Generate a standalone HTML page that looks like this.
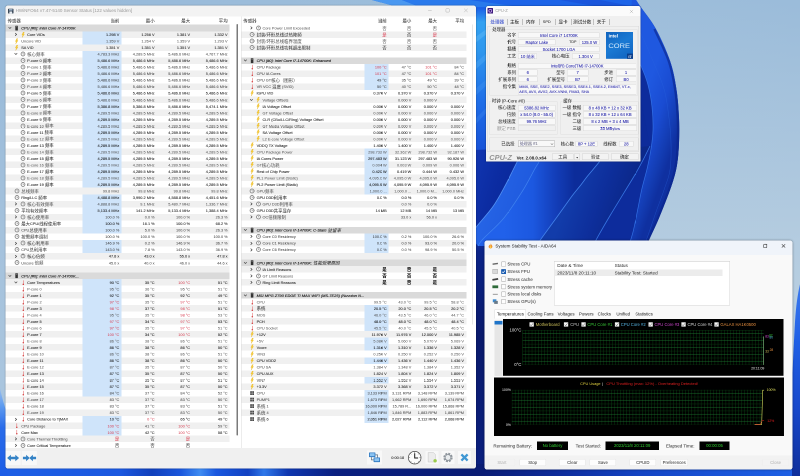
<!DOCTYPE html><html><head><meta charset="utf-8"><title>screenshot</title><style>
*{box-sizing:border-box}
html,body{margin:0;padding:0}
body{width:800px;height:476px;overflow:hidden;position:relative;background:#b4cce0}
#o{position:absolute;left:0;top:0;width:1600px;height:952px;transform:scale(0.5);transform-origin:0 0;will-change:transform;overflow:hidden}
#s{position:absolute;left:0;top:0;width:800px;height:476px;zoom:2;
 font-family:"Liberation Sans","Noto Sans CJK SC",sans-serif;font-size:3.85px;color:#1a1a1a;line-height:1}
.a{position:absolute}
.t{position:absolute;white-space:nowrap;line-height:6.52px;height:6.52px}
.r{position:absolute;height:6.819999999999999px;left:0}
.v{position:absolute;white-space:nowrap;text-align:right;line-height:6.52px;height:6.52px;top:0.3px}
.l{position:absolute;white-space:nowrap;line-height:6.52px;height:6.52px;top:0.3px}
.g{font-style:italic;color:#0a0a0a;font-size:3.95px;-webkit-text-stroke:0.09px #0a0a0a}
.c{font-size:4.4px;position:relative;top:0.35px;-webkit-text-stroke:0 transparent}
.cz .c,.czf .c{font-size:inherit;top:0}

.red{color:#d8364a;-webkit-text-stroke:0 transparent}
.ic{position:absolute}
.win{position:absolute;overflow:hidden}
.cz{position:absolute;white-space:nowrap;line-height:6px;height:6px}
.czf{position:absolute;background:#f8f8f8;border:0.3px solid #dadada;height:5.6px;line-height:5.2px;text-align:center;color:#1a1aa6;-webkit-text-stroke:0.05px #1a1aa6;white-space:nowrap;overflow:hidden}
.ad{position:absolute;white-space:nowrap;line-height:6px;height:6px}
.btn{position:absolute;background:#fdfdfd;border:0.3px solid #e6e6e6;border-radius:1.2px;text-align:center;height:6.8px;line-height:6.2px;white-space:nowrap}
</style></head><body><div id="o"><div id="s">
<svg width="0" height="0" style="position:absolute"><defs>
<symbol id="i-bolt" viewBox="0 0 6 10"><path d="M3.2 0 L0.6 5.4 L2.4 5.4 L1.2 10 L5.6 3.6 L3.5 3.6 L5.2 0 Z" fill="#f8cf3a" stroke="#e0aa18" stroke-width="0.45"/></symbol>
<symbol id="i-therm" viewBox="0 0 6 12"><rect x="2.35" y="0.6" width="1.3" height="8" fill="#e36a6a"/><circle cx="3" cy="9.7" r="1.7" fill="#cf3030"/></symbol>
<symbol id="i-clock" viewBox="0 0 10 10"><circle cx="5" cy="5" r="3.9" fill="#f6f6f6" stroke="#777" stroke-width="1.5"/><path d="M5 2.8 V5.2 H6.6" stroke="#666" stroke-width="0.8" fill="none"/></symbol>
<symbol id="i-chip" viewBox="0 0 6 10"><rect x="0.6" y="0.4" width="4.8" height="9.2" rx="0.8" fill="#333"/><rect x="1.6" y="1.6" width="2.8" height="1.4" fill="#888"/></symbol>
<symbol id="i-fan" viewBox="0 0 10 10"><rect x="0.5" y="0.5" width="9" height="9" fill="#444"/><path d="M0.5 5 H9.5 M5 0.5 V9.5" stroke="#ddd" stroke-width="1"/></symbol>
<symbol id="i-down" viewBox="0 0 10 10"><path d="M1.5 3 L5 6.8 L8.5 3" stroke="#444" stroke-width="1.6" fill="none"/></symbol>
<symbol id="i-right" viewBox="0 0 10 10"><path d="M3 1.5 L6.8 5 L3 8.5" stroke="#333" stroke-width="1.7" fill="none"/></symbol>
</defs></svg>
<svg class="a" style="left:0;top:0" width="800" height="476" viewBox="0 0 800 476">
<defs>
<linearGradient id="bg" x1="0" y1="0" x2="0" y2="1"><stop offset="0" stop-color="#9bbcda"/><stop offset="0.5" stop-color="#b4cce0"/><stop offset="1" stop-color="#c0d4e4"/></linearGradient>
<linearGradient id="bgx" x1="0" y1="0" x2="1" y2="0"><stop offset="0" stop-color="#8fb4d8" stop-opacity="0.4"/><stop offset="0.6" stop-color="#a6c4de" stop-opacity="0.2"/><stop offset="1" stop-color="#b7cfe3" stop-opacity="0"/></linearGradient>
<linearGradient id="pb" gradientUnits="userSpaceOnUse" x1="0" y1="0" x2="42" y2="22" spreadMethod="repeat"><stop offset="0" stop-color="#1f66ee"/><stop offset="0.45" stop-color="#1752da"/><stop offset="0.85" stop-color="#0c2fa6"/><stop offset="1" stop-color="#0a2794"/></linearGradient>
<linearGradient id="bAB" x1="0" y1="0.3" x2="1" y2="0.7"><stop offset="0" stop-color="#2a6aea"/><stop offset="1" stop-color="#1b54da"/></linearGradient>
<linearGradient id="bBC" gradientUnits="userSpaceOnUse" x1="505" y1="200" x2="575" y2="200"><stop offset="0" stop-color="#2161ea"/><stop offset="0.4" stop-color="#1c58e0"/><stop offset="0.7" stop-color="#1440bc"/><stop offset="1" stop-color="#0c2c9a"/></linearGradient>
<linearGradient id="bCD" gradientUnits="userSpaceOnUse" x1="570" y1="195" x2="625" y2="215"><stop offset="0" stop-color="#123caa"/><stop offset="0.5" stop-color="#0e2f9c"/><stop offset="1" stop-color="#0b2788"/></linearGradient>
<linearGradient id="bDO" gradientUnits="userSpaceOnUse" x1="640" y1="110" x2="682" y2="125"><stop offset="0" stop-color="#1f58e0"/><stop offset="0.45" stop-color="#1a4cd2"/><stop offset="0.8" stop-color="#133cb2"/><stop offset="1" stop-color="#0f30a0"/></linearGradient>
<linearGradient id="bDD" gradientUnits="userSpaceOnUse" x1="620" y1="195" x2="655" y2="205"><stop offset="0" stop-color="#1a4cc8"/><stop offset="1" stop-color="#0e2f9e"/></linearGradient>
<linearGradient id="bDE" x1="0" y1="0" x2="0" y2="1"><stop offset="0" stop-color="#1c54dc"/><stop offset="0.6" stop-color="#194cd0"/><stop offset="1" stop-color="#123aae"/></linearGradient>
<linearGradient id="bEO" x1="0" y1="0" x2="0" y2="1"><stop offset="0" stop-color="#2162e4"/><stop offset="0.28" stop-color="#1b52d4"/><stop offset="0.5" stop-color="#143cb4"/><stop offset="1" stop-color="#0f2f9c"/></linearGradient>
<linearGradient id="b1" x1="0" y1="0.3" x2="1" y2="0.7"><stop offset="0" stop-color="#2068ee"/><stop offset="0.5" stop-color="#1752da"/><stop offset="1" stop-color="#0b2b9c"/></linearGradient>
<linearGradient id="b0" x1="0" y1="0" x2="1" y2="0.6"><stop offset="0" stop-color="#1238b4"/><stop offset="0.5" stop-color="#0c2ca2"/><stop offset="1" stop-color="#0a2696"/></linearGradient>
<linearGradient id="b4" x1="0" y1="0.3" x2="1" y2="0.6"><stop offset="0" stop-color="#1a56dc"/><stop offset="1" stop-color="#0c2c9e"/></linearGradient>
<linearGradient id="vs" x1="0" y1="0" x2="0" y2="1"><stop offset="0" stop-color="#1c60e8"/><stop offset="0.03" stop-color="#34a2f2"/><stop offset="0.09" stop-color="#2f98ee"/><stop offset="0.20" stop-color="#1f6ee8"/><stop offset="0.33" stop-color="#164cd4"/><stop offset="0.46" stop-color="#1240c0"/><stop offset="0.52" stop-color="#0b2488"/><stop offset="0.7" stop-color="#0a1a6c"/><stop offset="1" stop-color="#0b2080"/></linearGradient>
<linearGradient id="bs" x1="0" y1="0" x2="1" y2="0"><stop offset="0" stop-color="#1e5fe6"/><stop offset="0.15" stop-color="#1b58e0"/><stop offset="0.19" stop-color="#1140bc"/><stop offset="0.225" stop-color="#1a56dc"/><stop offset="0.25" stop-color="#3f8cf2"/><stop offset="0.27" stop-color="#1a58e0"/><stop offset="0.31" stop-color="#1242c2"/><stop offset="0.33" stop-color="#2f78ea"/><stop offset="0.36" stop-color="#0f37b0"/><stop offset="0.42" stop-color="#0b2080"/><stop offset="0.6" stop-color="#0a1c74"/><stop offset="0.7" stop-color="#0e2c9c"/><stop offset="0.8" stop-color="#1444c4"/><stop offset="0.9" stop-color="#1a54d8"/><stop offset="1" stop-color="#1f62e6"/></linearGradient>
<linearGradient id="ls" x1="0" y1="0" x2="0" y2="1"><stop offset="0" stop-color="#9cc0ee"/><stop offset="0.2" stop-color="#5f9cf0"/><stop offset="0.45" stop-color="#2a6cea"/><stop offset="1" stop-color="#1c5ce6"/></linearGradient>
<linearGradient id="rs" x1="0" y1="0" x2="0" y2="1"><stop offset="0" stop-color="#3a7af0"/><stop offset="0.3" stop-color="#2060e6"/><stop offset="0.65" stop-color="#1848cc"/><stop offset="1" stop-color="#0f2f9c"/></linearGradient>
</defs>
<rect width="800" height="476" fill="url(#bg)"/><rect width="800" height="476" fill="url(#bgx)"/>
<path d="M474 -4 L632 -4 L636 0 C636.8 1.2 637.4 2.2 640.7 7.0 C644.0 11.8 650.8 19.6 655.7 28.6 C660.6 37.6 666.5 50.6 670.0 60.7 C673.5 70.8 674.9 79.5 676.4 89.0 C677.9 98.5 678.6 109.0 679.0 118.0 C679.4 127.0 679.3 135.2 679.0 143.0 C678.7 150.8 678.2 157.9 677.0 165.0 C675.8 172.1 674.4 177.2 671.5 185.8 C668.6 194.4 663.3 207.6 659.5 216.8 C655.7 226.0 651.1 235.1 648.5 241.0 C645.9 246.9 644.8 250.2 644.0 252.0 L474 250 Z" fill="#0d2b9a"/>
<polygon points="372,0 636,0 641,8 644,12 474,12 398,7" fill="#1d64e8"/>
<polygon points="372,0 402,0 420,7 398,7" fill="#4a98f0"/>
<polygon points="402,0 470,0 520,7 420,7" fill="#2a7aec"/>
<polygon points="560,0 600,0 636,7 600,7" fill="#1a56dc"/>
<rect x="474" y="8" width="14" height="468" fill="url(#vs)"/>
<polygon points="474,38 488,28 488,33 474,44" fill="#58b4f6" opacity="0.55"/>
<polygon points="474,64 488,52 488,58 474,71" fill="#4aa6f4" opacity="0.5"/>
<polygon points="474,90 488,78 488,84 474,97" fill="#3f90f0" opacity="0.45"/>
<polygon points="474,120 488,106 488,111 474,126" fill="#3a84ee" opacity="0.4"/>
<path d="M474.0 250.0 C474.0 233.3 474.0 166.7 474.0 150.0 L524.0 148.0 C522.8 150.3 518.8 158.3 517.0 162.0 C515.2 165.7 515.0 166.0 513.0 170.0 C511.0 174.0 508.3 179.9 505.0 186.0 C501.7 192.1 497.7 199.8 493.0 206.5 C488.3 213.2 480.8 221.1 477.0 226.0 C473.2 230.9 471.2 234.3 470.0 236.0 Z" fill="url(#b0)"/>
<path d="M470.0 236.0 C471.2 234.3 473.2 230.9 477.0 226.0 C480.8 221.1 488.3 213.2 493.0 206.5 C497.7 199.8 501.7 192.1 505.0 186.0 C508.3 179.9 511.0 174.0 513.0 170.0 C515.0 166.0 515.2 165.7 517.0 162.0 C518.8 158.3 522.8 150.3 524.0 148.0 L546.0 148.0 C544.8 150.3 540.8 158.6 539.0 162.0 C537.2 165.4 537.8 163.8 535.0 168.6 C532.2 173.4 527.8 182.7 522.5 191.0 C517.2 199.3 510.1 210.5 503.5 218.5 C496.9 226.5 487.2 234.4 483.0 239.0 C478.8 243.6 478.8 244.8 478.0 246.0 Z" fill="url(#bAB)"/>
<path d="M478.0 246.0 C478.8 244.8 478.8 243.6 483.0 239.0 C487.2 234.4 496.9 226.5 503.5 218.5 C510.1 210.5 517.2 199.3 522.5 191.0 C527.8 182.7 532.2 173.4 535.0 168.6 C537.8 163.8 537.2 165.4 539.0 162.0 C540.8 158.6 544.8 150.3 546.0 148.0 L608.0 150.0 C606.4 152.2 601.7 158.8 598.4 163.0 C595.1 167.2 591.1 171.7 588.0 175.5 C584.9 179.3 582.7 182.6 580.0 186.0 C577.3 189.4 575.8 190.8 572.0 196.0 C568.2 201.2 562.2 209.8 557.0 217.0 C551.8 224.2 544.5 234.2 541.0 239.0 C537.5 243.8 536.8 244.8 536.0 246.0 Z" fill="url(#bBC)"/>
<path d="M536.0 246.0 C536.8 244.8 537.5 243.8 541.0 239.0 C544.5 234.2 551.8 224.2 557.0 217.0 C562.2 209.8 568.2 201.2 572.0 196.0 C575.8 190.8 577.3 189.4 580.0 186.0 C582.7 182.6 584.9 179.3 588.0 175.5 C591.1 171.7 595.1 167.2 598.4 163.0 C601.7 158.8 606.4 152.2 608.0 150.0 L650.0 146.0 C648.7 148.7 644.6 157.1 642.0 162.0 C639.4 166.9 637.5 170.4 634.5 175.5 C631.5 180.6 628.0 186.1 624.0 192.7 C620.0 199.3 614.7 207.8 610.4 215.0 C606.1 222.2 601.1 230.9 598.4 235.7 C595.7 240.5 594.7 242.6 594.0 244.0 Z" fill="url(#bCD)"/>
<path d="M594.0 244.0 C594.7 242.6 595.7 240.5 598.4 235.7 C601.1 230.9 606.1 222.2 610.4 215.0 C614.7 207.8 620.0 199.3 624.0 192.7 C628.0 186.1 631.5 180.6 634.5 175.5 C637.5 170.4 639.4 166.9 642.0 162.0 C644.6 157.1 648.7 148.7 650.0 146.0 L630.0 45.0 C631.8 48.5 638.0 59.3 641.0 66.0 C644.0 72.7 646.2 78.2 648.0 85.0 C649.8 91.8 651.2 99.5 652.0 107.0 C652.8 114.5 653.2 123.0 653.0 130.0 C652.8 137.0 652.0 142.7 651.0 149.0 C650.0 155.3 648.9 161.0 647.3 167.8 C645.7 174.6 643.1 183.3 641.6 190.0 C640.1 196.7 639.4 201.0 638.0 208.0 C636.6 215.0 634.7 225.3 633.0 232.0 C631.3 238.7 628.8 245.3 628.0 248.0 Z" fill="#0d2c9c"/>
<path d="M628.0 248.0 C628.8 245.3 631.3 238.7 633.0 232.0 C634.7 225.3 636.6 215.0 638.0 208.0 C639.4 201.0 640.1 196.7 641.6 190.0 C643.1 183.3 645.7 174.6 647.3 167.8 C648.9 161.0 650.0 155.3 651.0 149.0 C652.0 142.7 652.8 137.0 653.0 130.0 C653.2 123.0 652.8 114.5 652.0 107.0 C651.2 99.5 649.8 91.8 648.0 85.0 C646.2 78.2 644.0 72.7 641.0 66.0 C638.0 59.3 631.8 48.5 630.0 45.0 L632.0 -4.0 C632.7 -3.3 634.5 -1.8 636.0 0.0 C637.5 1.8 637.4 2.2 640.7 7.0 C644.0 11.8 650.8 19.6 655.7 28.6 C660.6 37.6 666.5 50.6 670.0 60.7 C673.5 70.8 674.9 79.5 676.4 89.0 C677.9 98.5 678.6 109.0 679.0 118.0 C679.4 127.0 679.3 135.2 679.0 143.0 C678.7 150.8 678.2 157.9 677.0 165.0 C675.8 172.1 674.4 177.2 671.5 185.8 C668.6 194.4 663.3 207.6 659.5 216.8 C655.7 226.0 651.1 235.1 648.5 241.0 C645.9 246.9 644.8 250.2 644.0 252.0 Z" fill="url(#bDO)"/>
<path d="M470.0 236.0 C471.2 234.3 473.2 230.9 477.0 226.0 C480.8 221.1 488.3 213.2 493.0 206.5 C497.7 199.8 501.7 192.1 505.0 186.0 C508.3 179.9 511.0 174.0 513.0 170.0 C515.0 166.0 515.2 165.7 517.0 162.0 C518.8 158.3 522.8 150.3 524.0 148.0" fill="none" stroke="#5a9af8" stroke-width="0.8" opacity="0.9"/>
<path d="M478.0 246.0 C478.8 244.8 478.8 243.6 483.0 239.0 C487.2 234.4 496.9 226.5 503.5 218.5 C510.1 210.5 517.2 199.3 522.5 191.0 C527.8 182.7 532.2 173.4 535.0 168.6 C537.8 163.8 537.2 165.4 539.0 162.0 C540.8 158.6 544.8 150.3 546.0 148.0" fill="none" stroke="#4a8ef6" stroke-width="0.7" opacity="0.8"/>
<path d="M536.0 246.0 C536.8 244.8 537.5 243.8 541.0 239.0 C544.5 234.2 551.8 224.2 557.0 217.0 C562.2 209.8 568.2 201.2 572.0 196.0 C575.8 190.8 577.3 189.4 580.0 186.0 C582.7 182.6 584.9 179.3 588.0 175.5 C591.1 171.7 595.1 167.2 598.4 163.0 C601.7 158.8 606.4 152.2 608.0 150.0" fill="none" stroke="#4a8ef6" stroke-width="0.8" opacity="0.85"/>
<path d="M594.0 244.0 C594.7 242.6 595.7 240.5 598.4 235.7 C601.1 230.9 606.1 222.2 610.4 215.0 C614.7 207.8 620.0 199.3 624.0 192.7 C628.0 186.1 631.5 180.6 634.5 175.5 C637.5 170.4 639.4 166.9 642.0 162.0 C644.6 157.1 648.7 148.7 650.0 146.0" fill="none" stroke="#3f82f0" stroke-width="0.8" opacity="0.85"/>
<path d="M628.0 248.0 C628.8 245.3 631.3 238.7 633.0 232.0 C634.7 225.3 636.6 215.0 638.0 208.0 C639.4 201.0 640.1 196.7 641.6 190.0 C643.1 183.3 645.7 174.6 647.3 167.8 C648.9 161.0 650.0 155.3 651.0 149.0 C652.0 142.7 652.8 137.0 653.0 130.0 C653.2 123.0 652.8 114.5 652.0 107.0 C651.2 99.5 649.8 91.8 648.0 85.0 C646.2 78.2 644.0 72.7 641.0 66.0 C638.0 59.3 631.8 48.5 630.0 45.0" fill="none" stroke="#3a7cf0" stroke-width="0.7" opacity="0.8"/>
<path d="M642.0 248.0 C642.7 246.8 643.7 247.0 646.0 241.0 C648.3 235.0 653.0 220.5 656.0 212.0 C659.0 203.5 661.7 197.0 664.0 190.0 C666.3 183.0 668.8 177.8 670.0 170.0 C671.2 162.2 671.2 151.7 671.0 143.0 C670.8 134.3 670.2 127.0 669.0 118.0 C667.8 109.0 666.8 98.7 664.0 89.0 C661.2 79.3 656.3 69.2 652.5 60.0 C648.7 50.8 644.4 40.7 641.0 34.0 C637.6 27.3 633.5 22.3 632.0 20.0" fill="none" stroke="#2a66e0" stroke-width="0.5" opacity="0.5"/>
<path d="M647.2 241.4 C649.0 237.4 654.4 226.4 658.2 217.2 C662.0 208.0 667.3 194.8 670.2 186.2 C673.1 177.6 674.5 172.5 675.7 165.4 C677.0 158.3 677.4 151.2 677.7 143.4 C678.0 135.6 678.1 127.4 677.7 118.4 C677.3 109.4 676.6 99.0 675.1 89.4 C673.6 79.9 672.2 71.2 668.7 61.1 C665.2 51.0 656.8 34.4 654.4 29.0" fill="none" stroke="#0a2488" stroke-width="2.2" opacity="0.6"/>
<rect x="0" y="464" width="800" height="12" fill="url(#bs)"/>
<path d="M0 388 C2 398 5 408 8 416 L8 476 L0 476 Z" fill="url(#ls)"/>
<path d="M800.5 282 C798 292 796 305 795 322 C794 340 793 360 792 385 L792 476 L800.5 476 Z" fill="url(#rs)"/>
</svg>
<div class="win" style="left:5.3px;top:5.6px;width:470.7px;height:463.1px;background:#f0f0f0;border-radius:2.6px;box-shadow:0 0 1.5px rgba(0,0,0,.45)">
<div class="a" style="left:0;top:0;width:470.7px;height:10.7px;background:#f3f3f3"></div>
<svg class="a" style="left:2.8px;top:2.9px" width="5.6" height="5.2" viewBox="0 0 11 10"><rect x="0.3" y="0.3" width="10.4" height="9.4" rx="1" fill="#1b2a3c"/><rect x="2" y="1" width="7" height="3.2" fill="#9fb4c8"/><rect x="2.6" y="5.6" width="5.8" height="4" fill="#e8eef4"/></svg>
<div class="t" style="left:10.3px;top:1.84px;color:#9b9b9b;font-size:4.5px">HWiNFO64 v7.47-5140 Sensor Status [122 values hidden]</div>
<svg class="a" style="left:421.3px;top:1.1px" width="44" height="8" viewBox="0 0 44 8"><path d="M1.6 4 H5.2" stroke="#b5b5b5" stroke-width="0.5"/><rect x="19.4" y="2.2" width="3.4" height="3.4" rx="0.6" fill="none" stroke="#b5b5b5" stroke-width="0.5"/><path d="M37.6 2.1 L41.2 5.7 M41.2 2.1 L37.6 5.7" stroke="#b5b5b5" stroke-width="0.5"/></svg>
<div class="a" style="left:0;top:10.70px;width:470.7px;height:431.70px;background:#fff"></div>
<div class="a" style="left:235.6px;top:10.90px;width:0.5px;height:431.50px;background:#d9d9d9"></div>
<div class="a" style="left:231.0px;top:18.30px;width:1.5px;height:411.70px;background:#7a7a7a;border-radius:0.8px"></div>
<div class="a" style="left:467.3px;top:18.90px;width:0.6px;height:300.00px;background:#cfcfcf"></div>
<div class="t" style="left:2.3px;top:12.34px;font-size:4.4px">传感器</div>
<div class="t" style="left:84.0px;width:30px;text-align:right;top:12.34px;font-size:4.4px">当前</div>
<div class="t" style="left:119.3px;width:30px;text-align:right;top:12.34px;font-size:4.4px">最小</div>
<div class="t" style="left:154.8px;width:30px;text-align:right;top:12.34px;font-size:4.4px">最大</div>
<div class="t" style="left:192.3px;width:30px;text-align:right;top:12.34px;font-size:4.4px">平均</div>
<div class="r" style="left:0.0px;top:19.15px;width:224.3px;background:#dadada;color:#1d1d1d;-webkit-text-stroke:0.05px #111"><svg class="ic" style="left:2.90px;top:1.36px" width="3.80" height="3.80"><use href="#i-down"/></svg><svg class="ic" style="left:9.90px;top:0.56px" width="3.20" height="5.40"><use href="#i-chip"/></svg><div class="l g" style="left:15.9px">CPU [#0]: Intel Core i7-14700K</div></div>
<div class="r" style="left:0.0px;top:25.67px;width:224.3px;background:#f0f0f0;color:#171717;-webkit-text-stroke:0.05px #111"><div class="a" style="left:77.2px;top:0;width:39.0px;height:6.82px;background:#cfe4fa"></div><svg class="ic" style="left:8.70px;top:1.36px" width="3.80" height="3.80"><use href="#i-right"/></svg><svg class="ic" style="left:16.00px;top:0.51px" width="3.30" height="5.50"><use href="#i-bolt"/></svg><div class="l" style="left:21.8px">Core VIDs</div><div class="v bv" style="left:74.0px;width:40px">1.298 V</div><div class="v" style="left:109.3px;width:40px">1.256 V</div><div class="v" style="left:144.8px;width:40px">1.381 V</div><div class="v" style="left:182.3px;width:40px">1.332 V</div></div>
<div class="r" style="left:0.0px;top:32.19px;width:224.3px;background:#fff;color:#494949"><div class="a" style="left:77.2px;top:0;width:39.0px;height:6.82px;background:#cfe4fa"></div><svg class="ic" style="left:9.80px;top:0.51px" width="3.30" height="5.50"><use href="#i-bolt"/></svg><div class="l" style="left:15.9px">Uncore VID</div><div class="v bv" style="left:74.0px;width:40px">1.359 V</div><div class="v" style="left:109.3px;width:40px">1.264 V</div><div class="v" style="left:144.8px;width:40px">1.359 V</div><div class="v" style="left:182.3px;width:40px">1.293 V</div></div>
<div class="r" style="left:0.0px;top:38.71px;width:224.3px;background:#f0f0f0;color:#1e1e1e;-webkit-text-stroke:0.05px #111"><svg class="ic" style="left:9.80px;top:0.51px" width="3.30" height="5.50"><use href="#i-bolt"/></svg><div class="l" style="left:15.9px">SA VID</div><div class="v" style="left:74.0px;width:40px">1.351 V</div><div class="v" style="left:109.3px;width:40px">1.351 V</div><div class="v" style="left:144.8px;width:40px">1.351 V</div><div class="v" style="left:182.3px;width:40px">1.351 V</div></div>
<div class="r" style="left:0.0px;top:45.23px;width:224.3px;background:#fff;color:#424242"><div class="a" style="left:77.2px;top:0;width:39.0px;height:6.82px;background:#cfe4fa"></div><svg class="ic" style="left:8.70px;top:1.36px" width="3.80" height="3.80"><use href="#i-down"/></svg><svg class="ic" style="left:15.20px;top:0.76px" width="5.00" height="5.00"><use href="#i-clock"/></svg><div class="l" style="left:21.8px"><span class="c">核心频率</span></div><div class="v bv" style="left:74.0px;width:40px">4,783.3 MHz</div><div class="v" style="left:109.3px;width:40px">4,289.5 MHz</div><div class="v" style="left:144.8px;width:40px">5,486.6 MHz</div><div class="v" style="left:182.3px;width:40px">4,767.7 MHz</div></div>
<div class="r" style="left:0.0px;top:51.75px;width:224.3px;background:#f0f0f0;color:#252525;-webkit-text-stroke:0.05px #111"><div class="a" style="left:77.2px;top:0;width:39.0px;height:6.82px;background:#cfe4fa"></div><svg class="ic" style="left:15.20px;top:0.76px" width="5.00" height="5.00"><use href="#i-clock"/></svg><div class="l" style="left:21.8px">P-core 0 <span class="c">频率</span></div><div class="v bv" style="left:74.0px;width:40px">5,486.6 MHz</div><div class="v" style="left:109.3px;width:40px">5,486.6 MHz</div><div class="v" style="left:144.8px;width:40px">5,486.6 MHz</div><div class="v" style="left:182.3px;width:40px">5,486.6 MHz</div></div>
<div class="r" style="left:0.0px;top:58.27px;width:224.3px;background:#fff;color:#3a3a3a"><div class="a" style="left:77.2px;top:0;width:39.0px;height:6.82px;background:#cfe4fa"></div><svg class="ic" style="left:15.20px;top:0.76px" width="5.00" height="5.00"><use href="#i-clock"/></svg><div class="l" style="left:21.8px">P-core 1 <span class="c">频率</span></div><div class="v bv" style="left:74.0px;width:40px">5,486.6 MHz</div><div class="v" style="left:109.3px;width:40px">5,486.6 MHz</div><div class="v" style="left:144.8px;width:40px">5,486.6 MHz</div><div class="v" style="left:182.3px;width:40px">5,486.6 MHz</div></div>
<div class="r" style="left:0.0px;top:64.79px;width:224.3px;background:#f0f0f0;color:#2d2d2d"><div class="a" style="left:77.2px;top:0;width:39.0px;height:6.82px;background:#cfe4fa"></div><svg class="ic" style="left:15.20px;top:0.76px" width="5.00" height="5.00"><use href="#i-clock"/></svg><div class="l" style="left:21.8px">P-core 2 <span class="c">频率</span></div><div class="v bv" style="left:74.0px;width:40px">5,486.6 MHz</div><div class="v" style="left:109.3px;width:40px">5,486.6 MHz</div><div class="v" style="left:144.8px;width:40px">5,486.6 MHz</div><div class="v" style="left:182.3px;width:40px">5,486.6 MHz</div></div>
<div class="r" style="left:0.0px;top:71.31px;width:224.3px;background:#fff;color:#323232"><div class="a" style="left:77.2px;top:0;width:39.0px;height:6.82px;background:#cfe4fa"></div><svg class="ic" style="left:15.20px;top:0.76px" width="5.00" height="5.00"><use href="#i-clock"/></svg><div class="l" style="left:21.8px">P-core 3 <span class="c">频率</span></div><div class="v bv" style="left:74.0px;width:40px">5,486.6 MHz</div><div class="v" style="left:109.3px;width:40px">5,486.6 MHz</div><div class="v" style="left:144.8px;width:40px">5,486.6 MHz</div><div class="v" style="left:182.3px;width:40px">5,486.6 MHz</div></div>
<div class="r" style="left:0.0px;top:77.83px;width:224.3px;background:#f0f0f0;color:#363636"><div class="a" style="left:77.2px;top:0;width:39.0px;height:6.82px;background:#cfe4fa"></div><svg class="ic" style="left:15.20px;top:0.76px" width="5.00" height="5.00"><use href="#i-clock"/></svg><div class="l" style="left:21.8px">P-core 4 <span class="c">频率</span></div><div class="v bv" style="left:74.0px;width:40px">5,486.6 MHz</div><div class="v" style="left:109.3px;width:40px">5,486.6 MHz</div><div class="v" style="left:144.8px;width:40px">5,486.6 MHz</div><div class="v" style="left:182.3px;width:40px">5,486.6 MHz</div></div>
<div class="r" style="left:0.0px;top:84.35px;width:224.3px;background:#fff;color:#292929;-webkit-text-stroke:0.05px #111"><div class="a" style="left:77.2px;top:0;width:39.0px;height:6.82px;background:#cfe4fa"></div><svg class="ic" style="left:15.20px;top:0.76px" width="5.00" height="5.00"><use href="#i-clock"/></svg><div class="l" style="left:21.8px">P-core 5 <span class="c">频率</span></div><div class="v bv" style="left:74.0px;width:40px">5,486.6 MHz</div><div class="v" style="left:109.3px;width:40px">5,486.6 MHz</div><div class="v" style="left:144.8px;width:40px">5,486.6 MHz</div><div class="v" style="left:182.3px;width:40px">5,486.6 MHz</div></div>
<div class="r" style="left:0.0px;top:90.87px;width:224.3px;background:#f0f0f0;color:#3e3e3e"><div class="a" style="left:77.2px;top:0;width:39.0px;height:6.82px;background:#cfe4fa"></div><svg class="ic" style="left:15.20px;top:0.76px" width="5.00" height="5.00"><use href="#i-clock"/></svg><div class="l" style="left:21.8px">P-core 6 <span class="c">频率</span></div><div class="v bv" style="left:74.0px;width:40px">5,486.6 MHz</div><div class="v" style="left:109.3px;width:40px">5,486.6 MHz</div><div class="v" style="left:144.8px;width:40px">5,486.6 MHz</div><div class="v" style="left:182.3px;width:40px">5,486.6 MHz</div></div>
<div class="r" style="left:0.0px;top:97.39px;width:224.3px;background:#fff;color:#212121;-webkit-text-stroke:0.05px #111"><div class="a" style="left:77.2px;top:0;width:39.0px;height:6.82px;background:#cfe4fa"></div><svg class="ic" style="left:15.20px;top:0.76px" width="5.00" height="5.00"><use href="#i-clock"/></svg><div class="l" style="left:21.8px">P-core 7 <span class="c">频率</span></div><div class="v bv" style="left:74.0px;width:40px">5,386.8 MHz</div><div class="v" style="left:109.3px;width:40px">5,386.8 MHz</div><div class="v" style="left:144.8px;width:40px">5,486.6 MHz</div><div class="v" style="left:182.3px;width:40px">5,474.1 MHz</div></div>
<div class="r" style="left:0.0px;top:103.91px;width:224.3px;background:#f0f0f0;color:#454545"><div class="a" style="left:77.2px;top:0;width:39.0px;height:6.82px;background:#cfe4fa"></div><svg class="ic" style="left:15.20px;top:0.76px" width="5.00" height="5.00"><use href="#i-clock"/></svg><div class="l" style="left:21.8px">E-core 8 <span class="c">频率</span></div><div class="v bv" style="left:74.0px;width:40px">4,289.5 MHz</div><div class="v" style="left:109.3px;width:40px">4,289.5 MHz</div><div class="v" style="left:144.8px;width:40px">4,289.5 MHz</div><div class="v" style="left:182.3px;width:40px">4,289.5 MHz</div></div>
<div class="r" style="left:0.0px;top:110.43px;width:224.3px;background:#fff;color:#1a1a1a;-webkit-text-stroke:0.05px #111"><div class="a" style="left:77.2px;top:0;width:39.0px;height:6.82px;background:#cfe4fa"></div><svg class="ic" style="left:15.20px;top:0.76px" width="5.00" height="5.00"><use href="#i-clock"/></svg><div class="l" style="left:21.8px">E-core 9 <span class="c">频率</span></div><div class="v bv" style="left:74.0px;width:40px">4,289.5 MHz</div><div class="v" style="left:109.3px;width:40px">4,289.5 MHz</div><div class="v" style="left:144.8px;width:40px">4,289.5 MHz</div><div class="v" style="left:182.3px;width:40px">4,289.5 MHz</div></div>
<div class="r" style="left:0.0px;top:116.95px;width:224.3px;background:#f0f0f0;color:#4c4c4c"><div class="a" style="left:77.2px;top:0;width:39.0px;height:6.82px;background:#cfe4fa"></div><svg class="ic" style="left:15.20px;top:0.76px" width="5.00" height="5.00"><use href="#i-clock"/></svg><div class="l" style="left:21.8px">E-core 10 <span class="c">频率</span></div><div class="v bv" style="left:74.0px;width:40px">4,289.5 MHz</div><div class="v" style="left:109.3px;width:40px">4,289.5 MHz</div><div class="v" style="left:144.8px;width:40px">4,289.5 MHz</div><div class="v" style="left:182.3px;width:40px">4,289.5 MHz</div></div>
<div class="r" style="left:0.0px;top:123.47px;width:224.3px;background:#fff;color:#151515;-webkit-text-stroke:0.05px #111"><div class="a" style="left:77.2px;top:0;width:39.0px;height:6.82px;background:#cfe4fa"></div><svg class="ic" style="left:15.20px;top:0.76px" width="5.00" height="5.00"><use href="#i-clock"/></svg><div class="l" style="left:21.8px">E-core 11 <span class="c">频率</span></div><div class="v bv" style="left:74.0px;width:40px">4,289.5 MHz</div><div class="v" style="left:109.3px;width:40px">4,289.5 MHz</div><div class="v" style="left:144.8px;width:40px">4,289.5 MHz</div><div class="v" style="left:182.3px;width:40px">4,289.5 MHz</div></div>
<div class="r" style="left:0.0px;top:129.99px;width:224.3px;background:#f0f0f0;color:#505050"><div class="a" style="left:77.2px;top:0;width:39.0px;height:6.82px;background:#cfe4fa"></div><svg class="ic" style="left:15.20px;top:0.76px" width="5.00" height="5.00"><use href="#i-clock"/></svg><div class="l" style="left:21.8px">E-core 12 <span class="c">频率</span></div><div class="v bv" style="left:74.0px;width:40px">4,289.5 MHz</div><div class="v" style="left:109.3px;width:40px">4,289.5 MHz</div><div class="v" style="left:144.8px;width:40px">4,289.5 MHz</div><div class="v" style="left:182.3px;width:40px">4,289.5 MHz</div></div>
<div class="r" style="left:0.0px;top:136.51px;width:224.3px;background:#fff;color:#111111;-webkit-text-stroke:0.05px #111"><div class="a" style="left:77.2px;top:0;width:39.0px;height:6.82px;background:#cfe4fa"></div><svg class="ic" style="left:15.20px;top:0.76px" width="5.00" height="5.00"><use href="#i-clock"/></svg><div class="l" style="left:21.8px">E-core 13 <span class="c">频率</span></div><div class="v bv" style="left:74.0px;width:40px">4,289.5 MHz</div><div class="v" style="left:109.3px;width:40px">4,289.5 MHz</div><div class="v" style="left:144.8px;width:40px">4,289.5 MHz</div><div class="v" style="left:182.3px;width:40px">4,289.5 MHz</div></div>
<div class="r" style="left:0.0px;top:143.03px;width:224.3px;background:#f0f0f0;color:#535353"><div class="a" style="left:77.2px;top:0;width:39.0px;height:6.82px;background:#cfe4fa"></div><svg class="ic" style="left:15.20px;top:0.76px" width="5.00" height="5.00"><use href="#i-clock"/></svg><div class="l" style="left:21.8px">E-core 14 <span class="c">频率</span></div><div class="v bv" style="left:74.0px;width:40px">4,289.5 MHz</div><div class="v" style="left:109.3px;width:40px">4,289.5 MHz</div><div class="v" style="left:144.8px;width:40px">4,289.5 MHz</div><div class="v" style="left:182.3px;width:40px">4,289.5 MHz</div></div>
<div class="r" style="left:0.0px;top:149.55px;width:224.3px;background:#fff;color:#101010;-webkit-text-stroke:0.05px #111"><div class="a" style="left:77.2px;top:0;width:39.0px;height:6.82px;background:#cfe4fa"></div><svg class="ic" style="left:15.20px;top:0.76px" width="5.00" height="5.00"><use href="#i-clock"/></svg><div class="l" style="left:21.8px">E-core 15 <span class="c">频率</span></div><div class="v bv" style="left:74.0px;width:40px">4,289.5 MHz</div><div class="v" style="left:109.3px;width:40px">4,289.5 MHz</div><div class="v" style="left:144.8px;width:40px">4,289.5 MHz</div><div class="v" style="left:182.3px;width:40px">4,289.5 MHz</div></div>
<div class="r" style="left:0.0px;top:156.07px;width:224.3px;background:#f0f0f0;color:#535353"><div class="a" style="left:77.2px;top:0;width:39.0px;height:6.82px;background:#cfe4fa"></div><svg class="ic" style="left:15.20px;top:0.76px" width="5.00" height="5.00"><use href="#i-clock"/></svg><div class="l" style="left:21.8px">E-core 16 <span class="c">频率</span></div><div class="v bv" style="left:74.0px;width:40px">4,289.5 MHz</div><div class="v" style="left:109.3px;width:40px">4,289.5 MHz</div><div class="v" style="left:144.8px;width:40px">4,289.5 MHz</div><div class="v" style="left:182.3px;width:40px">4,289.5 MHz</div></div>
<div class="r" style="left:0.0px;top:162.59px;width:224.3px;background:#fff;color:#101010;-webkit-text-stroke:0.05px #111"><div class="a" style="left:77.2px;top:0;width:39.0px;height:6.82px;background:#cfe4fa"></div><svg class="ic" style="left:15.20px;top:0.76px" width="5.00" height="5.00"><use href="#i-clock"/></svg><div class="l" style="left:21.8px">E-core 17 <span class="c">频率</span></div><div class="v bv" style="left:74.0px;width:40px">4,289.5 MHz</div><div class="v" style="left:109.3px;width:40px">4,289.5 MHz</div><div class="v" style="left:144.8px;width:40px">4,289.5 MHz</div><div class="v" style="left:182.3px;width:40px">4,289.5 MHz</div></div>
<div class="r" style="left:0.0px;top:169.11px;width:224.3px;background:#f0f0f0;color:#525252"><div class="a" style="left:77.2px;top:0;width:39.0px;height:6.82px;background:#cfe4fa"></div><svg class="ic" style="left:15.20px;top:0.76px" width="5.00" height="5.00"><use href="#i-clock"/></svg><div class="l" style="left:21.8px">E-core 18 <span class="c">频率</span></div><div class="v bv" style="left:74.0px;width:40px">4,289.5 MHz</div><div class="v" style="left:109.3px;width:40px">4,289.5 MHz</div><div class="v" style="left:144.8px;width:40px">4,289.5 MHz</div><div class="v" style="left:182.3px;width:40px">4,289.5 MHz</div></div>
<div class="r" style="left:0.0px;top:175.63px;width:224.3px;background:#fff;color:#131313;-webkit-text-stroke:0.05px #111"><div class="a" style="left:77.2px;top:0;width:39.0px;height:6.82px;background:#cfe4fa"></div><svg class="ic" style="left:15.20px;top:0.76px" width="5.00" height="5.00"><use href="#i-clock"/></svg><div class="l" style="left:21.8px">E-core 19 <span class="c">频率</span></div><div class="v bv" style="left:74.0px;width:40px">4,289.5 MHz</div><div class="v" style="left:109.3px;width:40px">4,289.5 MHz</div><div class="v" style="left:144.8px;width:40px">4,289.5 MHz</div><div class="v" style="left:182.3px;width:40px">4,289.5 MHz</div></div>
<div class="r" style="left:0.0px;top:182.15px;width:224.3px;background:#f0f0f0;color:#4e4e4e"><svg class="ic" style="left:9.00px;top:0.76px" width="5.00" height="5.00"><use href="#i-clock"/></svg><div class="l" style="left:15.9px"><span class="c">总线频率</span></div><div class="v" style="left:74.0px;width:40px">99.8 MHz</div><div class="v" style="left:109.3px;width:40px">99.8 MHz</div><div class="v" style="left:144.8px;width:40px">99.8 MHz</div><div class="v" style="left:182.3px;width:40px">99.8 MHz</div></div>
<div class="r" style="left:0.0px;top:188.67px;width:224.3px;background:#fff;color:#171717;-webkit-text-stroke:0.05px #111"><div class="a" style="left:77.2px;top:0;width:39.0px;height:6.82px;background:#cfe4fa"></div><svg class="ic" style="left:9.00px;top:0.76px" width="5.00" height="5.00"><use href="#i-clock"/></svg><div class="l" style="left:15.9px">Ring/LLC <span class="c">频率</span></div><div class="v bv" style="left:74.0px;width:40px">4,488.8 MHz</div><div class="v" style="left:109.3px;width:40px">3,990.2 MHz</div><div class="v" style="left:144.8px;width:40px">4,588.8 MHz</div><div class="v" style="left:182.3px;width:40px">4,451.6 MHz</div></div>
<div class="r" style="left:0.0px;top:195.19px;width:224.3px;background:#f0f0f0;color:#494949"><div class="a" style="left:77.2px;top:0;width:39.0px;height:6.82px;background:#cfe4fa"></div><svg class="ic" style="left:8.70px;top:1.36px" width="3.80" height="3.80"><use href="#i-right"/></svg><svg class="ic" style="left:15.20px;top:0.76px" width="5.00" height="5.00"><use href="#i-clock"/></svg><div class="l" style="left:21.8px"><span class="c">核心有效频率</span></div><div class="v bv" style="left:74.0px;width:40px">4,888.8 MHz</div><div class="v" style="left:109.3px;width:40px">9.1 MHz</div><div class="v" style="left:144.8px;width:40px">5,480.7 MHz</div><div class="v" style="left:182.3px;width:40px">1,336.7 MHz</div></div>
<div class="r" style="left:0.0px;top:201.71px;width:224.3px;background:#fff;color:#1e1e1e;-webkit-text-stroke:0.05px #111"><div class="a" style="left:77.2px;top:0;width:39.0px;height:6.82px;background:#cfe4fa"></div><svg class="ic" style="left:9.00px;top:0.76px" width="5.00" height="5.00"><use href="#i-clock"/></svg><div class="l" style="left:15.9px"><span class="c">平均有效频率</span></div><div class="v bv" style="left:74.0px;width:40px">5,133.4 MHz</div><div class="v" style="left:109.3px;width:40px">141.2 MHz</div><div class="v" style="left:144.8px;width:40px">5,133.4 MHz</div><div class="v" style="left:182.3px;width:40px">1,388.4 MHz</div></div>
<div class="r" style="left:0.0px;top:208.23px;width:224.3px;background:#f0f0f0;color:#424242"><div class="a" style="left:77.2px;top:0;width:39.0px;height:6.82px;background:#cfe4fa"></div><svg class="ic" style="left:8.70px;top:1.36px" width="3.80" height="3.80"><use href="#i-right"/></svg><svg class="ic" style="left:15.20px;top:0.76px" width="5.00" height="5.00"><use href="#i-clock"/></svg><div class="l" style="left:21.8px"><span class="c">核心使用率</span></div><div class="v bv" style="left:74.0px;width:40px">100.0 %</div><div class="v" style="left:109.3px;width:40px">0.0 %</div><div class="v" style="left:144.8px;width:40px">100.0 %</div><div class="v" style="left:182.3px;width:40px">26.3 %</div></div>
<div class="r" style="left:0.0px;top:214.75px;width:224.3px;background:#fff;color:#252525;-webkit-text-stroke:0.05px #111"><div class="a" style="left:77.2px;top:0;width:39.0px;height:6.82px;background:#cfe4fa"></div><svg class="ic" style="left:9.00px;top:0.76px" width="5.00" height="5.00"><use href="#i-clock"/></svg><div class="l" style="left:15.9px"><span class="c">最大</span>CPU/<span class="c">线程使用率</span></div><div class="v bv" style="left:74.0px;width:40px">100.0 %</div><div class="v" style="left:109.3px;width:40px">16.1 %</div><div class="v" style="left:144.8px;width:40px">100.0 %</div><div class="v" style="left:182.3px;width:40px">68.2 %</div></div>
<div class="r" style="left:0.0px;top:221.27px;width:224.3px;background:#f0f0f0;color:#3a3a3a"><div class="a" style="left:77.2px;top:0;width:39.0px;height:6.82px;background:#cfe4fa"></div><svg class="ic" style="left:9.00px;top:0.76px" width="5.00" height="5.00"><use href="#i-clock"/></svg><div class="l" style="left:15.9px">CPU<span class="c">总使用率</span></div><div class="v bv" style="left:74.0px;width:40px">100.0 %</div><div class="v" style="left:109.3px;width:40px">5.0 %</div><div class="v" style="left:144.8px;width:40px">100.0 %</div><div class="v" style="left:182.3px;width:40px">26.3 %</div></div>
<div class="r" style="left:0.0px;top:227.79px;width:224.3px;background:#fff;color:#2d2d2d"><svg class="ic" style="left:9.00px;top:0.76px" width="5.00" height="5.00"><use href="#i-clock"/></svg><div class="l" style="left:15.9px"><span class="c">按需频率调制</span></div><div class="v" style="left:74.0px;width:40px">100.0 %</div><div class="v" style="left:109.3px;width:40px">100.0 %</div><div class="v" style="left:144.8px;width:40px">100.0 %</div><div class="v" style="left:182.3px;width:40px">100.0 %</div></div>
<div class="r" style="left:0.0px;top:234.31px;width:224.3px;background:#f0f0f0;color:#323232"><div class="a" style="left:77.2px;top:0;width:39.0px;height:6.82px;background:#cfe4fa"></div><svg class="ic" style="left:8.70px;top:1.36px" width="3.80" height="3.80"><use href="#i-right"/></svg><svg class="ic" style="left:15.20px;top:0.76px" width="5.00" height="5.00"><use href="#i-clock"/></svg><div class="l" style="left:21.8px"><span class="c">核心利用率</span></div><div class="v bv" style="left:74.0px;width:40px">146.9 %</div><div class="v" style="left:109.3px;width:40px">0.2 %</div><div class="v" style="left:144.8px;width:40px">146.9 %</div><div class="v" style="left:182.3px;width:40px">36.7 %</div></div>
<div class="r" style="left:0.0px;top:240.83px;width:224.3px;background:#fff;color:#363636"><div class="a" style="left:77.2px;top:0;width:39.0px;height:6.82px;background:#cfe4fa"></div><svg class="ic" style="left:9.00px;top:0.76px" width="5.00" height="5.00"><use href="#i-clock"/></svg><div class="l" style="left:15.9px">CPU<span class="c">总利用率</span></div><div class="v bv" style="left:74.0px;width:40px">143.0 %</div><div class="v" style="left:109.3px;width:40px">7.8 %</div><div class="v" style="left:144.8px;width:40px">143.0 %</div><div class="v" style="left:182.3px;width:40px">36.9 %</div></div>
<div class="r" style="left:0.0px;top:247.35px;width:224.3px;background:#f0f0f0;color:#292929;-webkit-text-stroke:0.05px #111"><svg class="ic" style="left:8.70px;top:1.36px" width="3.80" height="3.80"><use href="#i-right"/></svg><svg class="ic" style="left:15.20px;top:0.76px" width="5.00" height="5.00"><use href="#i-clock"/></svg><div class="l" style="left:21.8px"><span class="c">核心倍频</span></div><div class="v" style="left:74.0px;width:40px">47.8 x</div><div class="v" style="left:109.3px;width:40px">43.0 x</div><div class="v" style="left:144.8px;width:40px">55.0 x</div><div class="v" style="left:182.3px;width:40px">47.8 x</div></div>
<div class="r" style="left:0.0px;top:253.87px;width:224.3px;background:#fff;color:#3e3e3e"><svg class="ic" style="left:9.00px;top:0.76px" width="5.00" height="5.00"><use href="#i-clock"/></svg><div class="l" style="left:15.9px">Uncore <span class="c">倍频</span></div><div class="v" style="left:74.0px;width:40px">45.0 x</div><div class="v" style="left:109.3px;width:40px">40.0 x</div><div class="v" style="left:144.8px;width:40px">46.0 x</div><div class="v" style="left:182.3px;width:40px">44.6 x</div></div>
<div class="r" style="left:0.0px;top:260.39px;width:224.3px;background:#f0f0f0"></div>
<div class="r" style="left:0.0px;top:266.91px;width:224.3px;background:#dadada;color:#1d1d1d;-webkit-text-stroke:0.05px #111"><svg class="ic" style="left:2.90px;top:1.36px" width="3.80" height="3.80"><use href="#i-down"/></svg><svg class="ic" style="left:9.90px;top:0.56px" width="3.20" height="5.40"><use href="#i-chip"/></svg><div class="l g" style="left:15.9px">CPU [#0]: Intel Core i7-14700K...</div></div>
<div class="r" style="left:0.0px;top:273.43px;width:224.3px;background:#f0f0f0;color:#1a1a1a;-webkit-text-stroke:0.05px #111"><div class="a" style="left:77.2px;top:0;width:39.0px;height:6.82px;background:#cfe4fa"></div><svg class="ic" style="left:8.70px;top:1.36px" width="3.80" height="3.80"><use href="#i-down"/></svg><svg class="ic" style="left:16.50px;top:0.76px" width="2.60" height="5.40"><use href="#i-therm"/></svg><div class="l" style="left:21.8px">Core Temperatures</div><div class="v bv" style="left:74.0px;width:40px">90 °C</div><div class="v" style="left:109.3px;width:40px">35 °C</div><div class="v red" style="left:144.8px;width:40px">100 °C</div><div class="v" style="left:182.3px;width:40px">51 °C</div></div>
<div class="r" style="left:0.0px;top:279.95px;width:224.3px;background:#fff;color:#4c4c4c"><div class="a" style="left:77.2px;top:0;width:39.0px;height:6.82px;background:#cfe4fa"></div><svg class="ic" style="left:16.50px;top:0.76px" width="2.60" height="5.40"><use href="#i-therm"/></svg><div class="l" style="left:21.8px">P-core 0</div><div class="v bv" style="left:74.0px;width:40px">95 °C</div><div class="v" style="left:109.3px;width:40px">36 °C</div><div class="v" style="left:144.8px;width:40px">95 °C</div><div class="v" style="left:182.3px;width:40px">51 °C</div></div>
<div class="r" style="left:0.0px;top:286.47px;width:224.3px;background:#f0f0f0;color:#151515;-webkit-text-stroke:0.05px #111"><div class="a" style="left:77.2px;top:0;width:39.0px;height:6.82px;background:#cfe4fa"></div><svg class="ic" style="left:16.50px;top:0.76px" width="2.60" height="5.40"><use href="#i-therm"/></svg><div class="l" style="left:21.8px">P-core 1</div><div class="v bv" style="left:74.0px;width:40px">92 °C</div><div class="v" style="left:109.3px;width:40px">35 °C</div><div class="v" style="left:144.8px;width:40px">92 °C</div><div class="v" style="left:182.3px;width:40px">49 °C</div></div>
<div class="r" style="left:0.0px;top:292.99px;width:224.3px;background:#fff;color:#505050"><div class="a" style="left:77.2px;top:0;width:39.0px;height:6.82px;background:#cfe4fa"></div><svg class="ic" style="left:16.50px;top:0.76px" width="2.60" height="5.40"><use href="#i-therm"/></svg><div class="l" style="left:21.8px">P-core 2</div><div class="v bv red" style="left:74.0px;width:40px">97 °C</div><div class="v" style="left:109.3px;width:40px">35 °C</div><div class="v red" style="left:144.8px;width:40px">97 °C</div><div class="v" style="left:182.3px;width:40px">51 °C</div></div>
<div class="r" style="left:0.0px;top:299.51px;width:224.3px;background:#f0f0f0;color:#111111;-webkit-text-stroke:0.05px #111"><div class="a" style="left:77.2px;top:0;width:39.0px;height:6.82px;background:#cfe4fa"></div><svg class="ic" style="left:16.50px;top:0.76px" width="2.60" height="5.40"><use href="#i-therm"/></svg><div class="l" style="left:21.8px">P-core 3</div><div class="v bv red" style="left:74.0px;width:40px">98 °C</div><div class="v" style="left:109.3px;width:40px">37 °C</div><div class="v red" style="left:144.8px;width:40px">98 °C</div><div class="v" style="left:182.3px;width:40px">51 °C</div></div>
<div class="r" style="left:0.0px;top:306.03px;width:224.3px;background:#fff;color:#535353"><div class="a" style="left:77.2px;top:0;width:39.0px;height:6.82px;background:#cfe4fa"></div><svg class="ic" style="left:16.50px;top:0.76px" width="2.60" height="5.40"><use href="#i-therm"/></svg><div class="l" style="left:21.8px">P-core 4</div><div class="v bv" style="left:74.0px;width:40px">95 °C</div><div class="v" style="left:109.3px;width:40px">35 °C</div><div class="v red" style="left:144.8px;width:40px">98 °C</div><div class="v" style="left:182.3px;width:40px">53 °C</div></div>
<div class="r" style="left:0.0px;top:312.55px;width:224.3px;background:#f0f0f0;color:#101010;-webkit-text-stroke:0.05px #111"><div class="a" style="left:77.2px;top:0;width:39.0px;height:6.82px;background:#cfe4fa"></div><svg class="ic" style="left:16.50px;top:0.76px" width="2.60" height="5.40"><use href="#i-therm"/></svg><div class="l" style="left:21.8px">P-core 5</div><div class="v bv red" style="left:74.0px;width:40px">97 °C</div><div class="v" style="left:109.3px;width:40px">34 °C</div><div class="v red" style="left:144.8px;width:40px">97 °C</div><div class="v" style="left:182.3px;width:40px">53 °C</div></div>
<div class="r" style="left:0.0px;top:319.07px;width:224.3px;background:#fff;color:#535353"><div class="a" style="left:77.2px;top:0;width:39.0px;height:6.82px;background:#cfe4fa"></div><svg class="ic" style="left:16.50px;top:0.76px" width="2.60" height="5.40"><use href="#i-therm"/></svg><div class="l" style="left:21.8px">P-core 6</div><div class="v bv red" style="left:74.0px;width:40px">97 °C</div><div class="v" style="left:109.3px;width:40px">35 °C</div><div class="v red" style="left:144.8px;width:40px">97 °C</div><div class="v" style="left:182.3px;width:40px">51 °C</div></div>
<div class="r" style="left:0.0px;top:325.59px;width:224.3px;background:#f0f0f0;color:#101010;-webkit-text-stroke:0.05px #111"><div class="a" style="left:77.2px;top:0;width:39.0px;height:6.82px;background:#cfe4fa"></div><svg class="ic" style="left:16.50px;top:0.76px" width="2.60" height="5.40"><use href="#i-therm"/></svg><div class="l" style="left:21.8px">P-core 7</div><div class="v bv red" style="left:74.0px;width:40px">100 °C</div><div class="v" style="left:109.3px;width:40px">34 °C</div><div class="v red" style="left:144.8px;width:40px">100 °C</div><div class="v" style="left:182.3px;width:40px">52 °C</div></div>
<div class="r" style="left:0.0px;top:332.11px;width:224.3px;background:#fff;color:#525252"><div class="a" style="left:77.2px;top:0;width:39.0px;height:6.82px;background:#cfe4fa"></div><svg class="ic" style="left:16.50px;top:0.76px" width="2.60" height="5.40"><use href="#i-therm"/></svg><div class="l" style="left:21.8px">E-core 8</div><div class="v bv" style="left:74.0px;width:40px">86 °C</div><div class="v" style="left:109.3px;width:40px">38 °C</div><div class="v" style="left:144.8px;width:40px">86 °C</div><div class="v" style="left:182.3px;width:40px">51 °C</div></div>
<div class="r" style="left:0.0px;top:338.63px;width:224.3px;background:#f0f0f0;color:#131313;-webkit-text-stroke:0.05px #111"><div class="a" style="left:77.2px;top:0;width:39.0px;height:6.82px;background:#cfe4fa"></div><svg class="ic" style="left:16.50px;top:0.76px" width="2.60" height="5.40"><use href="#i-therm"/></svg><div class="l" style="left:21.8px">E-core 9</div><div class="v bv" style="left:74.0px;width:40px">86 °C</div><div class="v" style="left:109.3px;width:40px">38 °C</div><div class="v" style="left:144.8px;width:40px">86 °C</div><div class="v" style="left:182.3px;width:40px">50 °C</div></div>
<div class="r" style="left:0.0px;top:345.15px;width:224.3px;background:#fff;color:#4e4e4e"><div class="a" style="left:77.2px;top:0;width:39.0px;height:6.82px;background:#cfe4fa"></div><svg class="ic" style="left:16.50px;top:0.76px" width="2.60" height="5.40"><use href="#i-therm"/></svg><div class="l" style="left:21.8px">E-core 10</div><div class="v bv" style="left:74.0px;width:40px">86 °C</div><div class="v" style="left:109.3px;width:40px">38 °C</div><div class="v" style="left:144.8px;width:40px">86 °C</div><div class="v" style="left:182.3px;width:40px">51 °C</div></div>
<div class="r" style="left:0.0px;top:351.67px;width:224.3px;background:#f0f0f0;color:#171717;-webkit-text-stroke:0.05px #111"><div class="a" style="left:77.2px;top:0;width:39.0px;height:6.82px;background:#cfe4fa"></div><svg class="ic" style="left:16.50px;top:0.76px" width="2.60" height="5.40"><use href="#i-therm"/></svg><div class="l" style="left:21.8px">E-core 11</div><div class="v bv" style="left:74.0px;width:40px">86 °C</div><div class="v" style="left:109.3px;width:40px">38 °C</div><div class="v" style="left:144.8px;width:40px">86 °C</div><div class="v" style="left:182.3px;width:40px">50 °C</div></div>
<div class="r" style="left:0.0px;top:358.19px;width:224.3px;background:#fff;color:#494949"><div class="a" style="left:77.2px;top:0;width:39.0px;height:6.82px;background:#cfe4fa"></div><svg class="ic" style="left:16.50px;top:0.76px" width="2.60" height="5.40"><use href="#i-therm"/></svg><div class="l" style="left:21.8px">E-core 12</div><div class="v bv" style="left:74.0px;width:40px">87 °C</div><div class="v" style="left:109.3px;width:40px">35 °C</div><div class="v" style="left:144.8px;width:40px">87 °C</div><div class="v" style="left:182.3px;width:40px">50 °C</div></div>
<div class="r" style="left:0.0px;top:364.71px;width:224.3px;background:#f0f0f0;color:#1e1e1e;-webkit-text-stroke:0.05px #111"><div class="a" style="left:77.2px;top:0;width:39.0px;height:6.82px;background:#cfe4fa"></div><svg class="ic" style="left:16.50px;top:0.76px" width="2.60" height="5.40"><use href="#i-therm"/></svg><div class="l" style="left:21.8px">E-core 13</div><div class="v bv" style="left:74.0px;width:40px">87 °C</div><div class="v" style="left:109.3px;width:40px">35 °C</div><div class="v" style="left:144.8px;width:40px">87 °C</div><div class="v" style="left:182.3px;width:40px">50 °C</div></div>
<div class="r" style="left:0.0px;top:371.23px;width:224.3px;background:#fff;color:#424242"><div class="a" style="left:77.2px;top:0;width:39.0px;height:6.82px;background:#cfe4fa"></div><svg class="ic" style="left:16.50px;top:0.76px" width="2.60" height="5.40"><use href="#i-therm"/></svg><div class="l" style="left:21.8px">E-core 14</div><div class="v bv" style="left:74.0px;width:40px">87 °C</div><div class="v" style="left:109.3px;width:40px">35 °C</div><div class="v" style="left:144.8px;width:40px">87 °C</div><div class="v" style="left:182.3px;width:40px">51 °C</div></div>
<div class="r" style="left:0.0px;top:377.75px;width:224.3px;background:#f0f0f0;color:#252525;-webkit-text-stroke:0.05px #111"><div class="a" style="left:77.2px;top:0;width:39.0px;height:6.82px;background:#cfe4fa"></div><svg class="ic" style="left:16.50px;top:0.76px" width="2.60" height="5.40"><use href="#i-therm"/></svg><div class="l" style="left:21.8px">E-core 15</div><div class="v bv" style="left:74.0px;width:40px">87 °C</div><div class="v" style="left:109.3px;width:40px">35 °C</div><div class="v" style="left:144.8px;width:40px">87 °C</div><div class="v" style="left:182.3px;width:40px">50 °C</div></div>
<div class="r" style="left:0.0px;top:384.27px;width:224.3px;background:#fff;color:#3a3a3a"><div class="a" style="left:77.2px;top:0;width:39.0px;height:6.82px;background:#cfe4fa"></div><svg class="ic" style="left:16.50px;top:0.76px" width="2.60" height="5.40"><use href="#i-therm"/></svg><div class="l" style="left:21.8px">E-core 16</div><div class="v bv" style="left:74.0px;width:40px">84 °C</div><div class="v" style="left:109.3px;width:40px">37 °C</div><div class="v" style="left:144.8px;width:40px">84 °C</div><div class="v" style="left:182.3px;width:40px">52 °C</div></div>
<div class="r" style="left:0.0px;top:390.79px;width:224.3px;background:#f0f0f0;color:#2d2d2d"><svg class="ic" style="left:16.50px;top:0.76px" width="2.60" height="5.40"><use href="#i-therm"/></svg><div class="l" style="left:21.8px">E-core 17</div><div class="v" style="left:74.0px;width:40px">83 °C</div><div class="v" style="left:109.3px;width:40px">37 °C</div><div class="v" style="left:144.8px;width:40px">83 °C</div><div class="v" style="left:182.3px;width:40px">50 °C</div></div>
<div class="r" style="left:0.0px;top:397.31px;width:224.3px;background:#fff;color:#323232"><svg class="ic" style="left:16.50px;top:0.76px" width="2.60" height="5.40"><use href="#i-therm"/></svg><div class="l" style="left:21.8px">E-core 18</div><div class="v" style="left:74.0px;width:40px">83 °C</div><div class="v" style="left:109.3px;width:40px">37 °C</div><div class="v" style="left:144.8px;width:40px">83 °C</div><div class="v" style="left:182.3px;width:40px">51 °C</div></div>
<div class="r" style="left:0.0px;top:403.83px;width:224.3px;background:#f0f0f0;color:#363636"><svg class="ic" style="left:16.50px;top:0.76px" width="2.60" height="5.40"><use href="#i-therm"/></svg><div class="l" style="left:21.8px">E-core 19</div><div class="v" style="left:74.0px;width:40px">83 °C</div><div class="v" style="left:109.3px;width:40px">37 °C</div><div class="v" style="left:144.8px;width:40px">83 °C</div><div class="v" style="left:182.3px;width:40px">50 °C</div></div>
<div class="r" style="left:0.0px;top:410.35px;width:224.3px;background:#fff;color:#292929;-webkit-text-stroke:0.05px #111"><div class="a" style="left:77.2px;top:0;width:39.0px;height:6.82px;background:#cfe4fa"></div><svg class="ic" style="left:8.70px;top:1.36px" width="3.80" height="3.80"><use href="#i-right"/></svg><svg class="ic" style="left:16.50px;top:0.76px" width="2.60" height="5.40"><use href="#i-therm"/></svg><div class="l" style="left:21.8px">Core Distance to TjMAX</div><div class="v bv" style="left:74.0px;width:40px">10 °C</div><div class="v red" style="left:109.3px;width:40px">0 °C</div><div class="v" style="left:144.8px;width:40px">65 °C</div><div class="v" style="left:182.3px;width:40px">49 °C</div></div>
<div class="r" style="left:0.0px;top:416.87px;width:224.3px;background:#f0f0f0;color:#3e3e3e"><div class="a" style="left:77.2px;top:0;width:39.0px;height:6.82px;background:#cfe4fa"></div><svg class="ic" style="left:10.30px;top:0.76px" width="2.60" height="5.40"><use href="#i-therm"/></svg><div class="l" style="left:15.9px">CPU Package</div><div class="v bv red" style="left:74.0px;width:40px">100 °C</div><div class="v" style="left:109.3px;width:40px">41 °C</div><div class="v red" style="left:144.8px;width:40px">100 °C</div><div class="v" style="left:182.3px;width:40px">59 °C</div></div>
<div class="r" style="left:0.0px;top:423.39px;width:224.3px;background:#fff;color:#212121;-webkit-text-stroke:0.05px #111"><div class="a" style="left:77.2px;top:0;width:39.0px;height:6.82px;background:#cfe4fa"></div><svg class="ic" style="left:10.30px;top:0.76px" width="2.60" height="5.40"><use href="#i-therm"/></svg><div class="l" style="left:15.9px">Core Max</div><div class="v bv red" style="left:74.0px;width:40px">100 °C</div><div class="v" style="left:109.3px;width:40px">42 °C</div><div class="v red" style="left:144.8px;width:40px">100 °C</div><div class="v" style="left:182.3px;width:40px">58 °C</div></div>
<div class="r" style="left:0.0px;top:429.91px;width:224.3px;background:#f0f0f0;color:#454545"><svg class="ic" style="left:8.70px;top:1.36px" width="3.80" height="3.80"><use href="#i-right"/></svg><svg class="ic" style="left:15.20px;top:0.76px" width="5.00" height="5.00"><use href="#i-clock"/></svg><div class="l" style="left:21.8px">Core Thermal Throttling</div><div class="v red" style="left:74.0px;width:40px"><span class="c">是</span></div><div class="v" style="left:109.3px;width:40px"><span class="c">否</span></div><div class="v red" style="left:144.8px;width:40px"><span class="c">是</span></div></div>
<div class="r" style="left:0.0px;top:436.43px;width:224.3px;background:#fff;color:#1a1a1a;-webkit-text-stroke:0.05px #111"><svg class="ic" style="left:8.70px;top:1.36px" width="3.80" height="3.80"><use href="#i-right"/></svg><svg class="ic" style="left:15.20px;top:0.76px" width="5.00" height="5.00"><use href="#i-clock"/></svg><div class="l" style="left:21.8px">Core Critical Temperature</div><div class="v" style="left:74.0px;width:40px"><span class="c">否</span></div><div class="v" style="left:109.3px;width:40px"><span class="c">否</span></div><div class="v" style="left:144.8px;width:40px"><span class="c">否</span></div></div>
<div class="t" style="left:238.0px;top:12.34px;font-size:4.4px">传感器</div>
<div class="t" style="left:351.4px;width:30px;text-align:right;top:12.34px;font-size:4.4px">当前</div>
<div class="t" style="left:376.0px;width:30px;text-align:right;top:12.34px;font-size:4.4px">最小</div>
<div class="t" style="left:401.7px;width:30px;text-align:right;top:12.34px;font-size:4.4px">最大</div>
<div class="t" style="left:428.7px;width:30px;text-align:right;top:12.34px;font-size:4.4px">平均</div>
<div class="r" style="left:236.1px;top:19.15px;width:225.1px;background:#fff;color:#4e4e4e"><svg class="ic" style="left:8.00px;top:1.36px" width="3.80" height="3.80"><use href="#i-right"/></svg><svg class="ic" style="left:14.50px;top:0.76px" width="5.00" height="5.00"><use href="#i-clock"/></svg><div class="l" style="left:21.1px">Core Power Limit Exceeded</div><div class="v" style="left:105.3px;width:40px"><span class="c">否</span></div><div class="v" style="left:129.9px;width:40px"><span class="c">否</span></div><div class="v" style="left:155.6px;width:40px"><span class="c">否</span></div></div>
<div class="r" style="left:236.1px;top:25.67px;width:225.1px;background:#f0f0f0;color:#171717;-webkit-text-stroke:0.05px #111"><svg class="ic" style="left:8.30px;top:0.76px" width="5.00" height="5.00"><use href="#i-clock"/></svg><div class="l" style="left:15.2px"><span class="c">封装</span>/<span class="c">环形总线过热降频</span></div><div class="v red" style="left:105.3px;width:40px"><span class="c">是</span></div><div class="v" style="left:129.9px;width:40px"><span class="c">否</span></div><div class="v red" style="left:155.6px;width:40px"><span class="c">是</span></div></div>
<div class="r" style="left:236.1px;top:32.19px;width:225.1px;background:#fff;color:#494949"><svg class="ic" style="left:8.30px;top:0.76px" width="5.00" height="5.00"><use href="#i-clock"/></svg><div class="l" style="left:15.2px"><span class="c">封装</span>/<span class="c">环形总线临界温度</span></div><div class="v" style="left:105.3px;width:40px"><span class="c">否</span></div><div class="v" style="left:129.9px;width:40px"><span class="c">否</span></div><div class="v" style="left:155.6px;width:40px"><span class="c">否</span></div></div>
<div class="r" style="left:236.1px;top:38.71px;width:225.1px;background:#f0f0f0;color:#1e1e1e;-webkit-text-stroke:0.05px #111"><svg class="ic" style="left:8.30px;top:0.76px" width="5.00" height="5.00"><use href="#i-clock"/></svg><div class="l" style="left:15.2px"><span class="c">封装</span>/<span class="c">环形总线功耗超出限制</span></div><div class="v" style="left:105.3px;width:40px"><span class="c">否</span></div><div class="v" style="left:129.9px;width:40px"><span class="c">否</span></div><div class="v" style="left:155.6px;width:40px"><span class="c">否</span></div></div>
<div class="r" style="left:236.1px;top:45.23px;width:225.1px;background:#fff"></div>
<div class="r" style="left:236.1px;top:51.75px;width:225.1px;background:#dadada;color:#1d1d1d;-webkit-text-stroke:0.05px #111"><svg class="ic" style="left:2.20px;top:1.36px" width="3.80" height="3.80"><use href="#i-down"/></svg><svg class="ic" style="left:9.20px;top:0.56px" width="3.20" height="5.40"><use href="#i-chip"/></svg><div class="l g" style="left:15.2px">CPU [#0]: Intel Core i7-14700K: Enhanced</div></div>
<div class="r" style="left:236.1px;top:58.27px;width:225.1px;background:#fff;color:#3a3a3a"><div class="a" style="left:123.2px;top:0;width:24.0px;height:6.82px;background:#cfe4fa"></div><svg class="ic" style="left:9.60px;top:0.76px" width="2.60" height="5.40"><use href="#i-therm"/></svg><div class="l" style="left:15.2px">CPU Package</div><div class="v bv red" style="left:105.3px;width:40px">100 °C</div><div class="v" style="left:129.9px;width:40px">47 °C</div><div class="v red" style="left:155.6px;width:40px">101 °C</div><div class="v" style="left:182.6px;width:40px">84 °C</div></div>
<div class="r" style="left:236.1px;top:64.79px;width:225.1px;background:#f0f0f0;color:#2d2d2d"><div class="a" style="left:123.2px;top:0;width:24.0px;height:6.82px;background:#cfe4fa"></div><svg class="ic" style="left:9.60px;top:0.76px" width="2.60" height="5.40"><use href="#i-therm"/></svg><div class="l" style="left:15.2px">CPU IA Cores</div><div class="v bv red" style="left:105.3px;width:40px">101 °C</div><div class="v" style="left:129.9px;width:40px">47 °C</div><div class="v red" style="left:155.6px;width:40px">101 °C</div><div class="v" style="left:182.6px;width:40px">84 °C</div></div>
<div class="r" style="left:236.1px;top:71.31px;width:225.1px;background:#fff;color:#323232"><div class="a" style="left:123.2px;top:0;width:24.0px;height:6.82px;background:#cfe4fa"></div><svg class="ic" style="left:9.60px;top:0.76px" width="2.60" height="5.40"><use href="#i-therm"/></svg><div class="l" style="left:15.2px">CPU GT<span class="c">核心（图形）</span></div><div class="v bv" style="left:105.3px;width:40px">49 °C</div><div class="v" style="left:129.9px;width:40px">35 °C</div><div class="v" style="left:155.6px;width:40px">49 °C</div><div class="v" style="left:182.6px;width:40px">39 °C</div></div>
<div class="r" style="left:236.1px;top:77.83px;width:225.1px;background:#f0f0f0;color:#363636"><div class="a" style="left:123.2px;top:0;width:24.0px;height:6.82px;background:#cfe4fa"></div><svg class="ic" style="left:9.60px;top:0.76px" width="2.60" height="5.40"><use href="#i-therm"/></svg><div class="l" style="left:15.2px">VR VCC <span class="c">温度</span> (SVID)</div><div class="v bv" style="left:105.3px;width:40px">50 °C</div><div class="v" style="left:129.9px;width:40px">40 °C</div><div class="v" style="left:155.6px;width:40px">50 °C</div><div class="v" style="left:182.6px;width:40px">48 °C</div></div>
<div class="r" style="left:236.1px;top:84.35px;width:225.1px;background:#fff;color:#292929;-webkit-text-stroke:0.05px #111"><svg class="ic" style="left:9.10px;top:0.51px" width="3.30" height="5.50"><use href="#i-bolt"/></svg><div class="l" style="left:15.2px">iGPU VID</div><div class="v" style="left:105.3px;width:40px">0.370 V</div><div class="v" style="left:129.9px;width:40px">0.370 V</div><div class="v" style="left:155.6px;width:40px">0.370 V</div><div class="v" style="left:182.6px;width:40px">0.370 V</div></div>
<div class="r" style="left:236.1px;top:90.87px;width:225.1px;background:#f0f0f0;color:#3e3e3e"><svg class="ic" style="left:8.00px;top:1.36px" width="3.80" height="3.80"><use href="#i-down"/></svg><svg class="ic" style="left:15.30px;top:0.51px" width="3.30" height="5.50"><use href="#i-bolt"/></svg><div class="l" style="left:21.1px">Voltage Offsets</div><div class="v" style="left:129.9px;width:40px">0.000 V</div><div class="v" style="left:155.6px;width:40px">0.000 V</div></div>
<div class="r" style="left:236.1px;top:97.39px;width:225.1px;background:#fff;color:#212121;-webkit-text-stroke:0.05px #111"><svg class="ic" style="left:15.30px;top:0.51px" width="3.30" height="5.50"><use href="#i-bolt"/></svg><div class="l" style="left:21.1px">IA Voltage Offset</div><div class="v" style="left:105.3px;width:40px">0.000 V</div><div class="v" style="left:129.9px;width:40px">0.000 V</div><div class="v" style="left:155.6px;width:40px">0.000 V</div><div class="v" style="left:182.6px;width:40px">0.000 V</div></div>
<div class="r" style="left:236.1px;top:103.91px;width:225.1px;background:#f0f0f0;color:#454545"><svg class="ic" style="left:15.30px;top:0.51px" width="3.30" height="5.50"><use href="#i-bolt"/></svg><div class="l" style="left:21.1px">GT Voltage Offset</div><div class="v" style="left:105.3px;width:40px">0.000 V</div><div class="v" style="left:129.9px;width:40px">0.000 V</div><div class="v" style="left:155.6px;width:40px">0.000 V</div><div class="v" style="left:182.6px;width:40px">0.000 V</div></div>
<div class="r" style="left:236.1px;top:110.43px;width:225.1px;background:#fff;color:#1a1a1a;-webkit-text-stroke:0.05px #111"><svg class="ic" style="left:15.30px;top:0.51px" width="3.30" height="5.50"><use href="#i-bolt"/></svg><div class="l" style="left:21.1px">CLR (CBo/LLC/Ring) Voltage Offset</div><div class="v" style="left:105.3px;width:40px">0.000 V</div><div class="v" style="left:129.9px;width:40px">0.000 V</div><div class="v" style="left:155.6px;width:40px">0.000 V</div><div class="v" style="left:182.6px;width:40px">0.000 V</div></div>
<div class="r" style="left:236.1px;top:116.95px;width:225.1px;background:#f0f0f0;color:#4c4c4c"><svg class="ic" style="left:15.30px;top:0.51px" width="3.30" height="5.50"><use href="#i-bolt"/></svg><div class="l" style="left:21.1px">GT Media Voltage Offset</div><div class="v" style="left:105.3px;width:40px">0.000 V</div><div class="v" style="left:129.9px;width:40px">0.000 V</div><div class="v" style="left:155.6px;width:40px">0.000 V</div><div class="v" style="left:182.6px;width:40px">0.000 V</div></div>
<div class="r" style="left:236.1px;top:123.47px;width:225.1px;background:#fff;color:#151515;-webkit-text-stroke:0.05px #111"><svg class="ic" style="left:15.30px;top:0.51px" width="3.30" height="5.50"><use href="#i-bolt"/></svg><div class="l" style="left:21.1px">SA Voltage Offset</div><div class="v" style="left:105.3px;width:40px">0.000 V</div><div class="v" style="left:129.9px;width:40px">0.000 V</div><div class="v" style="left:155.6px;width:40px">0.000 V</div><div class="v" style="left:182.6px;width:40px">0.000 V</div></div>
<div class="r" style="left:236.1px;top:129.99px;width:225.1px;background:#f0f0f0;color:#505050"><svg class="ic" style="left:15.30px;top:0.51px" width="3.30" height="5.50"><use href="#i-bolt"/></svg><div class="l" style="left:21.1px">L2 E-core Voltage Offset</div><div class="v" style="left:105.3px;width:40px">0.000 V</div><div class="v" style="left:129.9px;width:40px">0.000 V</div><div class="v" style="left:155.6px;width:40px">0.000 V</div><div class="v" style="left:182.6px;width:40px">0.000 V</div></div>
<div class="r" style="left:236.1px;top:136.51px;width:225.1px;background:#fff;color:#111111;-webkit-text-stroke:0.05px #111"><svg class="ic" style="left:9.10px;top:0.51px" width="3.30" height="5.50"><use href="#i-bolt"/></svg><div class="l" style="left:15.2px">VDDQ TX Voltage</div><div class="v" style="left:105.3px;width:40px">1.400 V</div><div class="v" style="left:129.9px;width:40px">1.400 V</div><div class="v" style="left:155.6px;width:40px">1.400 V</div><div class="v" style="left:182.6px;width:40px">1.400 V</div></div>
<div class="r" style="left:236.1px;top:143.03px;width:225.1px;background:#f0f0f0;color:#535353"><div class="a" style="left:123.2px;top:0;width:24.0px;height:6.82px;background:#cfe4fa"></div><svg class="ic" style="left:9.10px;top:0.51px" width="3.30" height="5.50"><use href="#i-bolt"/></svg><div class="l" style="left:15.2px">CPU Package Power</div><div class="v bv" style="left:105.3px;width:40px">298.732 W</div><div class="v" style="left:129.9px;width:40px">32.362 W</div><div class="v" style="left:155.6px;width:40px">298.732 W</div><div class="v" style="left:182.6px;width:40px">92.187 W</div></div>
<div class="r" style="left:236.1px;top:149.55px;width:225.1px;background:#fff;color:#101010;-webkit-text-stroke:0.05px #111"><div class="a" style="left:123.2px;top:0;width:24.0px;height:6.82px;background:#cfe4fa"></div><svg class="ic" style="left:9.10px;top:0.51px" width="3.30" height="5.50"><use href="#i-bolt"/></svg><div class="l" style="left:15.2px">IA Cores Power</div><div class="v bv" style="left:105.3px;width:40px">297.483 W</div><div class="v" style="left:129.9px;width:40px">31.123 W</div><div class="v" style="left:155.6px;width:40px">297.483 W</div><div class="v" style="left:182.6px;width:40px">90.926 W</div></div>
<div class="r" style="left:236.1px;top:156.07px;width:225.1px;background:#f0f0f0;color:#535353"><div class="a" style="left:123.2px;top:0;width:24.0px;height:6.82px;background:#cfe4fa"></div><svg class="ic" style="left:9.10px;top:0.51px" width="3.30" height="5.50"><use href="#i-bolt"/></svg><div class="l" style="left:15.2px">GT<span class="c">核心功耗</span></div><div class="v bv" style="left:105.3px;width:40px">0.004 W</div><div class="v" style="left:129.9px;width:40px">0.003 W</div><div class="v" style="left:155.6px;width:40px">0.009 W</div><div class="v" style="left:182.6px;width:40px">0.006 W</div></div>
<div class="r" style="left:236.1px;top:162.59px;width:225.1px;background:#fff;color:#101010;-webkit-text-stroke:0.05px #111"><div class="a" style="left:123.2px;top:0;width:24.0px;height:6.82px;background:#cfe4fa"></div><svg class="ic" style="left:9.10px;top:0.51px" width="3.30" height="5.50"><use href="#i-bolt"/></svg><div class="l" style="left:15.2px">Rest of Chip Power</div><div class="v bv" style="left:105.3px;width:40px">0.420 W</div><div class="v" style="left:129.9px;width:40px">0.419 W</div><div class="v" style="left:155.6px;width:40px">0.444 W</div><div class="v" style="left:182.6px;width:40px">0.432 W</div></div>
<div class="r" style="left:236.1px;top:169.11px;width:225.1px;background:#f0f0f0;color:#525252"><div class="a" style="left:123.2px;top:0;width:24.0px;height:6.82px;background:#cfe4fa"></div><svg class="ic" style="left:9.10px;top:0.51px" width="3.30" height="5.50"><use href="#i-bolt"/></svg><div class="l" style="left:15.2px">PL1 Power Limit (Static)</div><div class="v bv" style="left:105.3px;width:40px">4,095.0 W</div><div class="v" style="left:129.9px;width:40px">4,095.0 W</div><div class="v" style="left:155.6px;width:40px">4,095.0 W</div><div class="v" style="left:182.6px;width:40px">4,095.0 W</div></div>
<div class="r" style="left:236.1px;top:175.63px;width:225.1px;background:#fff;color:#131313;-webkit-text-stroke:0.05px #111"><div class="a" style="left:123.2px;top:0;width:24.0px;height:6.82px;background:#cfe4fa"></div><svg class="ic" style="left:9.10px;top:0.51px" width="3.30" height="5.50"><use href="#i-bolt"/></svg><div class="l" style="left:15.2px">PL2 Power Limit (Static)</div><div class="v bv" style="left:105.3px;width:40px">4,095.9 W</div><div class="v" style="left:129.9px;width:40px">4,095.9 W</div><div class="v" style="left:155.6px;width:40px">4,095.9 W</div><div class="v" style="left:182.6px;width:40px">4,095.9 W</div></div>
<div class="r" style="left:236.1px;top:182.15px;width:225.1px;background:#f0f0f0;color:#4e4e4e"><div class="a" style="left:123.2px;top:0;width:24.0px;height:6.82px;background:#cfe4fa"></div><svg class="ic" style="left:8.30px;top:0.76px" width="5.00" height="5.00"><use href="#i-clock"/></svg><div class="l" style="left:15.2px">GPU<span class="c">频率</span></div><div class="v bv" style="left:105.3px;width:40px">1,000.0 ...</div><div class="v" style="left:129.9px;width:40px">1,000.0 ...</div><div class="v" style="left:155.6px;width:40px">1,000.0 M...</div><div class="v" style="left:182.6px;width:40px">1,000.0 MHz</div></div>
<div class="r" style="left:236.1px;top:188.67px;width:225.1px;background:#fff;color:#171717;-webkit-text-stroke:0.05px #111"><svg class="ic" style="left:8.30px;top:0.76px" width="5.00" height="5.00"><use href="#i-clock"/></svg><div class="l" style="left:15.2px">GPU D3D<span class="c">利用率</span></div><div class="v" style="left:105.3px;width:40px">0.0 %</div><div class="v" style="left:129.9px;width:40px">0.0 %</div><div class="v" style="left:155.6px;width:40px">0.0 %</div><div class="v" style="left:182.6px;width:40px">0.0 %</div></div>
<div class="r" style="left:236.1px;top:195.19px;width:225.1px;background:#f0f0f0;color:#494949"><svg class="ic" style="left:8.00px;top:1.36px" width="3.80" height="3.80"><use href="#i-right"/></svg><svg class="ic" style="left:14.50px;top:0.76px" width="5.00" height="5.00"><use href="#i-clock"/></svg><div class="l" style="left:21.1px">GPU D3D<span class="c">利用率</span></div><div class="v" style="left:129.9px;width:40px">0.0 %</div><div class="v" style="left:155.6px;width:40px">0.0 %</div></div>
<div class="r" style="left:236.1px;top:201.71px;width:225.1px;background:#fff;color:#1e1e1e;-webkit-text-stroke:0.05px #111"><svg class="ic" style="left:8.30px;top:0.76px" width="5.00" height="5.00"><use href="#i-clock"/></svg><div class="l" style="left:15.2px">GPU D3D<span class="c">共享显存</span></div><div class="v" style="left:105.3px;width:40px">14 MB</div><div class="v" style="left:129.9px;width:40px">12 MB</div><div class="v" style="left:155.6px;width:40px">14 MB</div><div class="v" style="left:182.6px;width:40px">13 MB</div></div>
<div class="r" style="left:236.1px;top:208.23px;width:225.1px;background:#f0f0f0;color:#424242"><svg class="ic" style="left:8.00px;top:1.36px" width="3.80" height="3.80"><use href="#i-right"/></svg><svg class="ic" style="left:14.50px;top:0.76px" width="5.00" height="5.00"><use href="#i-clock"/></svg><div class="l" style="left:21.1px">OC<span class="c">倍频限制</span></div><div class="v" style="left:129.9px;width:40px">33.0 x</div><div class="v" style="left:155.6px;width:40px">56.0 x</div></div>
<div class="r" style="left:236.1px;top:214.75px;width:225.1px;background:#fff"></div>
<div class="r" style="left:236.1px;top:221.27px;width:225.1px;background:#dadada;color:#1d1d1d;-webkit-text-stroke:0.05px #111"><svg class="ic" style="left:2.20px;top:1.36px" width="3.80" height="3.80"><use href="#i-down"/></svg><svg class="ic" style="left:9.20px;top:0.56px" width="3.20" height="5.40"><use href="#i-chip"/></svg><div class="l g" style="left:15.2px">CPU [#0]: Intel Core i7-14700K: C-State <span class="c">驻留率</span></div></div>
<div class="r" style="left:236.1px;top:227.79px;width:225.1px;background:#fff;color:#2d2d2d"><div class="a" style="left:123.2px;top:0;width:24.0px;height:6.82px;background:#cfe4fa"></div><svg class="ic" style="left:8.00px;top:1.36px" width="3.80" height="3.80"><use href="#i-right"/></svg><svg class="ic" style="left:14.50px;top:0.76px" width="5.00" height="5.00"><use href="#i-clock"/></svg><div class="l" style="left:21.1px">Core C0 Residency</div><div class="v bv" style="left:105.3px;width:40px">100.0 %</div><div class="v" style="left:129.9px;width:40px">0.2 %</div><div class="v" style="left:155.6px;width:40px">100.0 %</div><div class="v" style="left:182.6px;width:40px">26.6 %</div></div>
<div class="r" style="left:236.1px;top:234.31px;width:225.1px;background:#f0f0f0;color:#323232"><div class="a" style="left:123.2px;top:0;width:24.0px;height:6.82px;background:#cfe4fa"></div><svg class="ic" style="left:8.00px;top:1.36px" width="3.80" height="3.80"><use href="#i-right"/></svg><svg class="ic" style="left:14.50px;top:0.76px" width="5.00" height="5.00"><use href="#i-clock"/></svg><div class="l" style="left:21.1px">Core C1 Residency</div><div class="v bv" style="left:105.3px;width:40px">0.0 %</div><div class="v" style="left:129.9px;width:40px">0.0 %</div><div class="v" style="left:155.6px;width:40px">93.0 %</div><div class="v" style="left:182.6px;width:40px">20.0 %</div></div>
<div class="r" style="left:236.1px;top:240.83px;width:225.1px;background:#fff;color:#363636"><div class="a" style="left:123.2px;top:0;width:24.0px;height:6.82px;background:#cfe4fa"></div><svg class="ic" style="left:8.00px;top:1.36px" width="3.80" height="3.80"><use href="#i-right"/></svg><svg class="ic" style="left:14.50px;top:0.76px" width="5.00" height="5.00"><use href="#i-clock"/></svg><div class="l" style="left:21.1px">Core C6 Residency</div><div class="v bv" style="left:105.3px;width:40px">0.0 %</div><div class="v" style="left:129.9px;width:40px">0.0 %</div><div class="v" style="left:155.6px;width:40px">98.9 %</div><div class="v" style="left:182.6px;width:40px">50.5 %</div></div>
<div class="r" style="left:236.1px;top:247.35px;width:225.1px;background:#f0f0f0"></div>
<div class="r" style="left:236.1px;top:253.87px;width:225.1px;background:#dadada;color:#1d1d1d;-webkit-text-stroke:0.05px #111"><svg class="ic" style="left:2.20px;top:1.36px" width="3.80" height="3.80"><use href="#i-down"/></svg><svg class="ic" style="left:9.20px;top:0.56px" width="3.20" height="5.40"><use href="#i-chip"/></svg><div class="l g" style="left:15.2px">CPU [#0]: Intel Core i7-14700K: <span class="c">性能受限原因</span></div></div>
<div class="r" style="left:236.1px;top:260.39px;width:225.1px;background:#f0f0f0;color:#212121;-webkit-text-stroke:0.05px #111"><svg class="ic" style="left:8.00px;top:1.36px" width="3.80" height="3.80"><use href="#i-right"/></svg><svg class="ic" style="left:14.50px;top:0.76px" width="5.00" height="5.00"><use href="#i-clock"/></svg><div class="l" style="left:21.1px">IA Limit Reasons</div><div class="v" style="left:105.3px;width:40px;font-weight:bold;color:#000"><span class="c">是</span></div><div class="v" style="left:129.9px;width:40px;font-weight:bold;color:#000"><span class="c">否</span></div><div class="v" style="left:155.6px;width:40px;font-weight:bold;color:#000"><span class="c">是</span></div></div>
<div class="r" style="left:236.1px;top:266.91px;width:225.1px;background:#fff;color:#454545"><svg class="ic" style="left:8.00px;top:1.36px" width="3.80" height="3.80"><use href="#i-right"/></svg><svg class="ic" style="left:14.50px;top:0.76px" width="5.00" height="5.00"><use href="#i-clock"/></svg><div class="l" style="left:21.1px">GT Limit Reasons</div><div class="v" style="left:105.3px;width:40px;font-weight:bold;color:#000"><span class="c">否</span></div><div class="v" style="left:129.9px;width:40px;font-weight:bold;color:#000"><span class="c">否</span></div><div class="v" style="left:155.6px;width:40px;font-weight:bold;color:#000"><span class="c">否</span></div></div>
<div class="r" style="left:236.1px;top:273.43px;width:225.1px;background:#f0f0f0;color:#1a1a1a;-webkit-text-stroke:0.05px #111"><svg class="ic" style="left:8.00px;top:1.36px" width="3.80" height="3.80"><use href="#i-right"/></svg><svg class="ic" style="left:14.50px;top:0.76px" width="5.00" height="5.00"><use href="#i-clock"/></svg><div class="l" style="left:21.1px">Ring Limit Reasons</div><div class="v" style="left:105.3px;width:40px;font-weight:bold;color:#000"><span class="c">是</span></div><div class="v" style="left:129.9px;width:40px;font-weight:bold;color:#000"><span class="c">否</span></div><div class="v" style="left:155.6px;width:40px;font-weight:bold;color:#000"><span class="c">是</span></div></div>
<div class="r" style="left:236.1px;top:279.95px;width:225.1px;background:#fff"></div>
<div class="r" style="left:236.1px;top:286.47px;width:225.1px;background:#dadada;color:#1d1d1d;-webkit-text-stroke:0.05px #111"><svg class="ic" style="left:2.20px;top:1.36px" width="3.80" height="3.80"><use href="#i-down"/></svg><svg class="ic" style="left:9.20px;top:0.56px" width="3.20" height="5.40"><use href="#i-chip"/></svg><div class="l g" style="left:15.2px">MSI MPG Z790 EDGE TI MAX WIFI (MS-7E25) (Nuvoton N...</div></div>
<div class="r" style="left:236.1px;top:292.99px;width:225.1px;background:#fff;color:#505050"><svg class="ic" style="left:9.60px;top:0.76px" width="2.60" height="5.40"><use href="#i-therm"/></svg><div class="l" style="left:15.2px">CPU</div><div class="v" style="left:105.3px;width:40px">99.5 °C</div><div class="v" style="left:129.9px;width:40px">43.0 °C</div><div class="v" style="left:155.6px;width:40px">99.5 °C</div><div class="v" style="left:182.6px;width:40px">58.8 °C</div></div>
<div class="r" style="left:236.1px;top:299.51px;width:225.1px;background:#f0f0f0;color:#111111;-webkit-text-stroke:0.05px #111"><div class="a" style="left:123.2px;top:0;width:24.0px;height:6.82px;background:#cfe4fa"></div><svg class="ic" style="left:9.60px;top:0.76px" width="2.60" height="5.40"><use href="#i-therm"/></svg><div class="l" style="left:15.2px"><span class="c">系统</span></div><div class="v bv" style="left:105.3px;width:40px">20.5 °C</div><div class="v" style="left:129.9px;width:40px">20.0 °C</div><div class="v" style="left:155.6px;width:40px">20.5 °C</div><div class="v" style="left:182.6px;width:40px">20.2 °C</div></div>
<div class="r" style="left:236.1px;top:306.03px;width:225.1px;background:#fff;color:#535353"><div class="a" style="left:123.2px;top:0;width:24.0px;height:6.82px;background:#cfe4fa"></div><svg class="ic" style="left:9.60px;top:0.76px" width="2.60" height="5.40"><use href="#i-therm"/></svg><div class="l" style="left:15.2px">MOS</div><div class="v bv" style="left:105.3px;width:40px">46.0 °C</div><div class="v" style="left:129.9px;width:40px">43.5 °C</div><div class="v" style="left:155.6px;width:40px">46.0 °C</div><div class="v" style="left:182.6px;width:40px">44.7 °C</div></div>
<div class="r" style="left:236.1px;top:312.55px;width:225.1px;background:#f0f0f0;color:#101010;-webkit-text-stroke:0.05px #111"><div class="a" style="left:123.2px;top:0;width:24.0px;height:6.82px;background:#cfe4fa"></div><svg class="ic" style="left:9.60px;top:0.76px" width="2.60" height="5.40"><use href="#i-therm"/></svg><div class="l" style="left:15.2px">PCH</div><div class="v bv" style="left:105.3px;width:40px">48.0 °C</div><div class="v" style="left:129.9px;width:40px">48.0 °C</div><div class="v" style="left:155.6px;width:40px">48.0 °C</div><div class="v" style="left:182.6px;width:40px">48.4 °C</div></div>
<div class="r" style="left:236.1px;top:319.07px;width:225.1px;background:#fff;color:#535353"><div class="a" style="left:123.2px;top:0;width:24.0px;height:6.82px;background:#cfe4fa"></div><svg class="ic" style="left:9.60px;top:0.76px" width="2.60" height="5.40"><use href="#i-therm"/></svg><div class="l" style="left:15.2px">CPU Socket</div><div class="v bv" style="left:105.3px;width:40px">45.5 °C</div><div class="v" style="left:129.9px;width:40px">40.0 °C</div><div class="v" style="left:155.6px;width:40px">45.5 °C</div><div class="v" style="left:182.6px;width:40px">40.5 °C</div></div>
<div class="r" style="left:236.1px;top:325.59px;width:225.1px;background:#f0f0f0;color:#101010;-webkit-text-stroke:0.05px #111"><svg class="ic" style="left:9.10px;top:0.51px" width="3.30" height="5.50"><use href="#i-bolt"/></svg><div class="l" style="left:15.2px">+12V</div><div class="v" style="left:105.3px;width:40px">11.976 V</div><div class="v" style="left:129.9px;width:40px">11.976 V</div><div class="v" style="left:155.6px;width:40px">12.000 V</div><div class="v" style="left:182.6px;width:40px">11.985 V</div></div>
<div class="r" style="left:236.1px;top:332.11px;width:225.1px;background:#fff;color:#525252"><div class="a" style="left:123.2px;top:0;width:24.0px;height:6.82px;background:#cfe4fa"></div><svg class="ic" style="left:9.10px;top:0.51px" width="3.30" height="5.50"><use href="#i-bolt"/></svg><div class="l" style="left:15.2px">+5V</div><div class="v bv" style="left:105.3px;width:40px">5.080 V</div><div class="v" style="left:129.9px;width:40px">5.060 V</div><div class="v" style="left:155.6px;width:40px">5.070 V</div><div class="v" style="left:182.6px;width:40px">5.069 V</div></div>
<div class="r" style="left:236.1px;top:338.63px;width:225.1px;background:#f0f0f0;color:#131313;-webkit-text-stroke:0.05px #111"><div class="a" style="left:123.2px;top:0;width:24.0px;height:6.82px;background:#cfe4fa"></div><svg class="ic" style="left:9.10px;top:0.51px" width="3.30" height="5.50"><use href="#i-bolt"/></svg><div class="l" style="left:15.2px">Vcore</div><div class="v bv" style="left:105.3px;width:40px">1.316 V</div><div class="v" style="left:129.9px;width:40px">1.310 V</div><div class="v" style="left:155.6px;width:40px">1.336 V</div><div class="v" style="left:182.6px;width:40px">1.328 V</div></div>
<div class="r" style="left:236.1px;top:345.15px;width:225.1px;background:#fff;color:#4e4e4e"><svg class="ic" style="left:9.10px;top:0.51px" width="3.30" height="5.50"><use href="#i-bolt"/></svg><div class="l" style="left:15.2px">VIN3</div><div class="v" style="left:105.3px;width:40px">0.250 V</div><div class="v" style="left:129.9px;width:40px">0.250 V</div><div class="v" style="left:155.6px;width:40px">0.252 V</div><div class="v" style="left:182.6px;width:40px">0.250 V</div></div>
<div class="r" style="left:236.1px;top:351.67px;width:225.1px;background:#f0f0f0;color:#171717;-webkit-text-stroke:0.05px #111"><div class="a" style="left:123.2px;top:0;width:24.0px;height:6.82px;background:#cfe4fa"></div><svg class="ic" style="left:9.10px;top:0.51px" width="3.30" height="5.50"><use href="#i-bolt"/></svg><div class="l" style="left:15.2px">CPU VDD2</div><div class="v bv" style="left:105.3px;width:40px">1.440 V</div><div class="v" style="left:129.9px;width:40px">1.436 V</div><div class="v" style="left:155.6px;width:40px">1.440 V</div><div class="v" style="left:182.6px;width:40px">1.436 V</div></div>
<div class="r" style="left:236.1px;top:358.19px;width:225.1px;background:#fff;color:#494949"><svg class="ic" style="left:9.10px;top:0.51px" width="3.30" height="5.50"><use href="#i-bolt"/></svg><div class="l" style="left:15.2px">CPU SA</div><div class="v" style="left:105.3px;width:40px">1.384 V</div><div class="v" style="left:129.9px;width:40px">1.348 V</div><div class="v" style="left:155.6px;width:40px">1.384 V</div><div class="v" style="left:182.6px;width:40px">1.352 V</div></div>
<div class="r" style="left:236.1px;top:364.71px;width:225.1px;background:#f0f0f0;color:#1e1e1e;-webkit-text-stroke:0.05px #111"><svg class="ic" style="left:9.10px;top:0.51px" width="3.30" height="5.50"><use href="#i-bolt"/></svg><div class="l" style="left:15.2px">CPU AUX</div><div class="v" style="left:105.3px;width:40px">1.824 V</div><div class="v" style="left:129.9px;width:40px">1.804 V</div><div class="v" style="left:155.6px;width:40px">1.824 V</div><div class="v" style="left:182.6px;width:40px">1.809 V</div></div>
<div class="r" style="left:236.1px;top:371.23px;width:225.1px;background:#fff;color:#424242"><div class="a" style="left:123.2px;top:0;width:24.0px;height:6.82px;background:#cfe4fa"></div><svg class="ic" style="left:9.10px;top:0.51px" width="3.30" height="5.50"><use href="#i-bolt"/></svg><div class="l" style="left:15.2px">VIN7</div><div class="v bv" style="left:105.3px;width:40px">1.552 V</div><div class="v" style="left:129.9px;width:40px">1.552 V</div><div class="v" style="left:155.6px;width:40px">1.554 V</div><div class="v" style="left:182.6px;width:40px">1.553 V</div></div>
<div class="r" style="left:236.1px;top:377.75px;width:225.1px;background:#f0f0f0;color:#252525;-webkit-text-stroke:0.05px #111"><svg class="ic" style="left:9.10px;top:0.51px" width="3.30" height="5.50"><use href="#i-bolt"/></svg><div class="l" style="left:15.2px">+3.3V</div><div class="v" style="left:105.3px;width:40px">3.372 V</div><div class="v" style="left:129.9px;width:40px">3.368 V</div><div class="v" style="left:155.6px;width:40px">3.372 V</div><div class="v" style="left:182.6px;width:40px">3.371 V</div></div>
<div class="r" style="left:236.1px;top:384.27px;width:225.1px;background:#fff;color:#3a3a3a"><div class="a" style="left:123.2px;top:0;width:24.0px;height:6.82px;background:#cfe4fa"></div><svg class="ic" style="left:8.80px;top:1.16px" width="4.20" height="4.20"><use href="#i-fan"/></svg><div class="l" style="left:15.2px">CPU</div><div class="v bv" style="left:105.3px;width:40px">3,133 RPM</div><div class="v" style="left:129.9px;width:40px">3,131 RPM</div><div class="v" style="left:155.6px;width:40px">3,148 RPM</div><div class="v" style="left:182.6px;width:40px">3,139 RPM</div></div>
<div class="r" style="left:236.1px;top:390.79px;width:225.1px;background:#f0f0f0;color:#2d2d2d"><div class="a" style="left:123.2px;top:0;width:24.0px;height:6.82px;background:#cfe4fa"></div><svg class="ic" style="left:8.80px;top:1.16px" width="4.20" height="4.20"><use href="#i-fan"/></svg><div class="l" style="left:15.2px">PUMP1</div><div class="v bv" style="left:105.3px;width:40px">1,673 RPM</div><div class="v" style="left:129.9px;width:40px">1,662 RPM</div><div class="v" style="left:155.6px;width:40px">1,690 RPM</div><div class="v" style="left:182.6px;width:40px">1,674 RPM</div></div>
<div class="r" style="left:236.1px;top:397.31px;width:225.1px;background:#fff;color:#323232"><div class="a" style="left:123.2px;top:0;width:24.0px;height:6.82px;background:#cfe4fa"></div><svg class="ic" style="left:8.80px;top:1.16px" width="4.20" height="4.20"><use href="#i-fan"/></svg><div class="l" style="left:15.2px"><span class="c">系统</span> 1</div><div class="v bv" style="left:105.3px;width:40px">16,000 RPM</div><div class="v" style="left:129.9px;width:40px">15,789 R...</div><div class="v" style="left:155.6px;width:40px">16,000 RPM</div><div class="v" style="left:182.6px;width:40px">15,868 RPM</div></div>
<div class="r" style="left:236.1px;top:403.83px;width:225.1px;background:#f0f0f0;color:#363636"><div class="a" style="left:123.2px;top:0;width:24.0px;height:6.82px;background:#cfe4fa"></div><svg class="ic" style="left:8.80px;top:1.16px" width="4.20" height="4.20"><use href="#i-fan"/></svg><div class="l" style="left:15.2px"><span class="c">系统</span> 4</div><div class="v bv" style="left:105.3px;width:40px">1,846 RPM</div><div class="v" style="left:129.9px;width:40px">1,846 RPM</div><div class="v" style="left:155.6px;width:40px">1,883 RPM</div><div class="v" style="left:182.6px;width:40px">1,861 RPM</div></div>
<div class="r" style="left:236.1px;top:410.35px;width:225.1px;background:#fff;color:#292929;-webkit-text-stroke:0.05px #111"><div class="a" style="left:123.2px;top:0;width:24.0px;height:6.82px;background:#cfe4fa"></div><svg class="ic" style="left:8.80px;top:1.16px" width="4.20" height="4.20"><use href="#i-fan"/></svg><div class="l" style="left:15.2px"><span class="c">系统</span> 6</div><div class="v bv" style="left:105.3px;width:40px">2,051 RPM</div><div class="v" style="left:129.9px;width:40px">2,027 RPM</div><div class="v" style="left:155.6px;width:40px">2,112 RPM</div><div class="v" style="left:182.6px;width:40px">2,068 RPM</div></div>
<div class="a" style="left:0;top:442.40px;width:470.7px;height:20.70px;background:#f0f0f0"></div>
<svg class="a" style="left:0.1px;top:445.6px" width="34" height="14" viewBox="0 0 34 14"><rect x="0" y="0" width="15.2" height="14" fill="#f8f8f8"/><rect x="16.2" y="0" width="15.2" height="14" fill="#f8f8f8"/><path d="M1.6 7 L5.4 3.8 V5.8 H9.8 V3.8 L13.6 7 L9.8 10.2 V8.2 H5.4 V10.2 Z" fill="#3583c6"/><path d="M17.4 5.8 H20.6 V3.8 L24.2 7 L20.6 10.2 V8.2 H17.4 Z M30.6 5.8 H27.4 V3.8 L23.8 7 L27.4 10.2 V8.2 H30.6 Z" fill="#3583c6"/></svg>
<svg class="a" style="left:361.9px;top:445.0px" width="15" height="14" viewBox="0 0 15 14"><rect x="0" y="0" width="15" height="14" fill="#f8f8f8"/><rect x="2" y="2" width="6.4" height="4.6" rx="0.5" fill="#2f78c0"/><rect x="6.6" y="7" width="6.4" height="4.6" rx="0.5" fill="#2f78c0"/><rect x="2.8" y="2.7" width="4.8" height="3" fill="#8cc4f2"/><rect x="7.4" y="7.7" width="4.8" height="3" fill="#8cc4f2"/><path d="M4.4 6.6 V9.4 H6.6 M10.6 7 V4.4 H8.4" stroke="#5a6a7a" stroke-width="0.7" fill="none"/></svg>
<div class="t" style="left:385.9px;top:448.74px;font-size:3.9px;color:#222;-webkit-text-stroke:0.05px #222">0:00:18</div>
<svg class="a" style="left:402.2px;top:444.7px" width="14.4" height="14.4" viewBox="0 0 14.4 14.4"><circle cx="7.2" cy="7.2" r="6.3" fill="#fcfcfc" stroke="#4a4a4a" stroke-width="0.75"/><path d="M7.2 2.8 V7.5 H10.6" stroke="#1a1a1a" stroke-width="1" fill="none"/><path d="M7.2 1.4v1.2M7.2 11.8v1.2M1.4 7.2h1.2M11.8 7.2h1.2M3.1 3.1l.8 .8M11.3 3.1l-.8 .8M3.1 11.3l.8-.8M11.3 11.3l-.8-.8" stroke="#666" stroke-width="0.5"/></svg>
<svg class="a" style="left:420.0px;top:445.4px" width="13" height="13" viewBox="0 0 13 13"><rect x="0" y="0" width="13" height="13" fill="#f8f8f8"/><path d="M2.6 1.6 H8 L9.8 3.4 V11 H2.6 Z" fill="#ececec" stroke="#c4c4c4" stroke-width="0.5"/><circle cx="9.6" cy="9.8" r="1.7" fill="#9acb4a"/></svg>
<svg class="a" style="left:436.2px;top:445.4px" width="13" height="13" viewBox="0 0 13 13"><rect x="0" y="0" width="13" height="13" fill="#f8f8f8"/><circle cx="6.5" cy="6.5" r="3.6" fill="none" stroke="#8e959c" stroke-width="2.2" stroke-dasharray="1.9 0.95"/><circle cx="6.5" cy="6.5" r="2.9" fill="#e9ecee" stroke="#8e959c" stroke-width="0.9"/></svg>
<svg class="a" style="left:452.9px;top:445.4px" width="13" height="13" viewBox="0 0 13 13"><rect x="0" y="0" width="13" height="13" fill="#f8f8f8"/><path d="M3.4 3.4 L9.6 9.6 M9.6 3.4 L3.4 9.6" stroke="#3f97d3" stroke-width="2.3"/></svg>
</div>
<div class="win" style="left:485.8px;top:6.0px;width:154.7px;height:155.5px;background:#f0f0f0;border-radius:2.4px 2.4px 0.5px 0.5px;box-shadow:0 0 1.5px rgba(0,0,0,.5);font-size:3.7px">
<div class="a" style="left:0;top:0;width:154.7px;height:10.2px;background:#fbfbfb"></div>
<svg class="a" style="left:1.8px;top:2.1px" width="5.6" height="5.6" viewBox="0 0 10 10"><rect width="10" height="10" rx="1" fill="#3a1a78"/><circle cx="5" cy="5" r="2.6" fill="none" stroke="#c9a6f2" stroke-width="1.4"/></svg>
<div class="cz" style="left:9.4px;top:2.20px;color:#a0a0a0;font-size:4.1px">CPU-Z</div>
<svg class="a" style="left:142.7px;top:2.3px" width="6" height="6" viewBox="0 0 6 6"><path d="M1.4 1.4 L4.6 4.6 M4.6 1.4 L1.4 4.6" stroke="#b8b8b8" stroke-width="0.5"/></svg>
<div class="cz" style="left:2.2px;width:18.5px;text-align:center;top:13.00px;color:#1a34c8;font-size:4.55px">处理器</div>
<div class="cz" style="left:22.2px;width:13.0px;text-align:center;top:13.00px;color:#111;font-size:4.55px">主板</div>
<div class="cz" style="left:38.2px;width:13.0px;text-align:center;top:13.00px;color:#111;font-size:4.55px">内存</div>
<div class="cz" style="left:54.7px;width:12.5px;text-align:center;top:13.00px;color:#111;font-size:3.90px">SPD</div>
<div class="cz" style="left:70.7px;width:13.0px;text-align:center;top:13.00px;color:#111;font-size:4.55px">显卡</div>
<div class="cz" style="left:86.2px;width:20.5px;text-align:center;top:13.00px;color:#111;font-size:4.55px">测试分数</div>
<div class="cz" style="left:108.7px;width:13.5px;text-align:center;top:13.00px;color:#111;font-size:4.55px">关于</div>
<div class="a" style="left:21.4px;top:13.0px;width:0.3px;height:6.2px;background:#909090"></div>
<div class="a" style="left:36.7px;top:13.0px;width:0.3px;height:6.2px;background:#909090"></div>
<div class="a" style="left:53.5px;top:13.0px;width:0.3px;height:6.2px;background:#909090"></div>
<div class="a" style="left:69.5px;top:13.0px;width:0.3px;height:6.2px;background:#909090"></div>
<div class="a" style="left:85.6px;top:13.0px;width:0.3px;height:6.2px;background:#909090"></div>
<div class="a" style="left:107.8px;top:13.0px;width:0.3px;height:6.2px;background:#909090"></div>
<div class="a" style="left:123.8px;top:13.0px;width:0.3px;height:6.2px;background:#909090"></div>
<div class="a" style="left:1.8px;top:20.0px;width:151.4px;height:126.0px;border:0.3px solid #d9d9d9"></div>
<div class="a" style="left:3.6px;top:23.6px;width:148.8px;height:66.4px;border:0.3px solid #dedede;border-radius:0.8px"></div>
<div class="cz" style="left:5.8px;top:20.60px;background:#f0f0f0;padding:0 0.6px;font-size:4.40px;color:#111"><span class="c">处理器</span></div>
<div class="cz" style="left:-9.8px;width:40px;text-align:right;top:26.20px;color:#111;font-size:4.40px"><span class="c">名字</span></div>
<div class="czf" style="left:32.4px;top:26.40px;width:81.3px;height:5.6px;line-height:5.1px;font-size:4.15px;">Intel Core i7 14700K</div>
<div class="cz" style="left:-9.8px;width:40px;text-align:right;top:33.20px;color:#111;font-size:4.40px"><span class="c">代号</span></div>
<div class="czf" style="left:32.4px;top:33.40px;width:37.2px;height:5.6px;line-height:5.1px;font-size:4.15px;">Raptor Lake</div>
<div class="cz" style="left:50.7px;width:40px;text-align:right;top:33.20px;color:#111;font-size:3.70px">TDP</div>
<div class="czf" style="left:93.7px;top:33.40px;width:20.0px;height:5.6px;line-height:5.1px;font-size:4.15px;">125.0 W</div>
<div class="cz" style="left:-9.8px;width:40px;text-align:right;top:40.20px;color:#111;font-size:4.40px"><span class="c">插槽</span></div>
<div class="czf" style="left:32.4px;top:40.40px;width:81.3px;height:5.6px;line-height:5.1px;font-size:4.15px;">Socket 1700 LGA</div>
<div class="cz" style="left:-9.8px;width:40px;text-align:right;top:47.20px;color:#111;font-size:4.40px"><span class="c">工艺</span></div>
<div class="czf" style="left:32.4px;top:47.40px;width:19.0px;height:5.6px;line-height:5.1px;font-size:4.15px;">10 <span class="c">纳米</span></div>
<div class="cz" style="left:43.7px;width:40px;text-align:right;top:47.20px;color:#111;font-size:4.40px"><span class="c">核心电压</span></div>
<div class="czf" style="left:86.0px;top:47.40px;width:27.7px;height:5.6px;line-height:5.1px;font-size:4.15px;">1.304 V</div>
<div class="cz" style="left:-9.8px;width:40px;text-align:right;top:56.70px;color:#111;font-size:4.40px"><span class="c">规格</span></div>
<div class="czf" style="left:32.4px;top:56.90px;width:118.0px;height:5.6px;line-height:5.1px;font-size:4.15px;">Intel(R) Core(TM) i7-14700K</div>
<div class="cz" style="left:-9.8px;width:40px;text-align:right;top:63.50px;color:#111;font-size:4.40px"><span class="c">系列</span></div>
<div class="czf" style="left:32.4px;top:63.70px;width:19.2px;height:5.6px;line-height:5.1px;font-size:4.15px;">6</div>
<div class="cz" style="left:39.2px;width:40px;text-align:right;top:63.50px;color:#111;font-size:4.40px"><span class="c">型号</span></div>
<div class="czf" style="left:81.2px;top:63.70px;width:21.4px;height:5.6px;line-height:5.1px;font-size:4.15px;">7</div>
<div class="cz" style="left:87.2px;width:40px;text-align:right;top:63.50px;color:#111;font-size:4.40px"><span class="c">步进</span></div>
<div class="czf" style="left:130.2px;top:63.70px;width:20.2px;height:5.6px;line-height:5.1px;font-size:4.15px;">1</div>
<div class="cz" style="left:-9.8px;width:40px;text-align:right;top:70.40px;color:#111;font-size:4.40px"><span class="c">扩展系列</span></div>
<div class="czf" style="left:32.4px;top:70.60px;width:19.2px;height:5.6px;line-height:5.1px;font-size:4.15px;">6</div>
<div class="cz" style="left:39.2px;width:40px;text-align:right;top:70.40px;color:#111;font-size:4.40px"><span class="c">扩展型号</span></div>
<div class="czf" style="left:81.2px;top:70.60px;width:21.4px;height:5.6px;line-height:5.1px;font-size:4.15px;">B7</div>
<div class="cz" style="left:87.2px;width:40px;text-align:right;top:70.40px;color:#111;font-size:4.40px"><span class="c">修订</span></div>
<div class="czf" style="left:130.2px;top:70.60px;width:20.2px;height:5.6px;line-height:5.1px;font-size:4.15px;">B0</div>
<div class="cz" style="left:-9.8px;width:40px;text-align:right;top:77.60px;color:#111;font-size:4.40px"><span class="c">指令集</span></div>
<div class="czf" style="left:32.4px;top:77.80px;width:118.0px;height:10.6px;line-height:5.1px;text-align:left;padding-left:0.6px;white-space:normal;font-size:3.8px">MMX, SSE, SSE2, SSE3, SSSE3, SSE4.1, SSE4.2, EM64T, VT-x,<br>AES, AVX, AVX2, AVX-VNNI, FMA3, SHA</div>
<svg class="a" style="left:120.1px;top:26.1px" width="27" height="26.8" viewBox="0 0 27 26.8"><defs><linearGradient id="ib" x1="0" y1="0" x2="0.6" y2="1"><stop offset="0" stop-color="#1264be"/><stop offset="0.55" stop-color="#1b7ad4"/><stop offset="1" stop-color="#1268c4"/></linearGradient></defs><rect width="27" height="26.8" fill="url(#ib)"/><rect x="21" y="21.6" width="6" height="5.2" fill="#0b3f8c"/><text x="2.6" y="5.6" font-family="Liberation Sans, sans-serif" font-size="4.2" font-weight="bold" fill="#fff" textLength="9.4" lengthAdjust="spacingAndGlyphs">intel</text><text x="2.4" y="15.9" font-family="Liberation Sans, sans-serif" font-size="6.6" fill="#d6eafc" textLength="21.6" lengthAdjust="spacingAndGlyphs">CORE</text><text x="24" y="25.8" text-anchor="middle" font-family="Liberation Sans, sans-serif" font-size="4" font-weight="bold" fill="#fff">i7</text></svg>
<div class="a" style="left:3.2px;top:95.2px;width:68.6px;height:33.7px;border:0.3px solid #dedede;border-radius:0.8px"></div>
<div class="cz" style="left:5.4px;top:92.20px;background:#f0f0f0;padding:0 0.6px;font-size:4.40px;color:#111"><span class="c">时钟</span> (P-Core #0)</div>
<div class="cz" style="left:-10.2px;width:40px;text-align:right;top:98.70px;color:#111;font-size:4.40px"><span class="c">核心速度</span></div>
<div class="czf" style="left:32.0px;top:98.90px;width:37.6px;height:5.6px;line-height:5.1px;font-size:4.15px;">5386.82 MHz</div>
<div class="cz" style="left:-10.2px;width:40px;text-align:right;top:105.50px;color:#111;font-size:4.40px"><span class="c">倍频</span></div>
<div class="czf" style="left:32.0px;top:105.70px;width:37.6px;height:5.6px;line-height:5.1px;font-size:4.15px;">x 54.0 (8.0 - 55.0)</div>
<div class="cz" style="left:-10.2px;width:40px;text-align:right;top:112.50px;color:#111;font-size:4.40px"><span class="c">总线速度</span></div>
<div class="czf" style="left:32.0px;top:112.70px;width:37.6px;height:5.6px;line-height:5.1px;font-size:4.15px;">99.76 MHz</div>
<div class="cz" style="left:-10.2px;width:40px;text-align:right;top:119.40px;color:#9a9a9a;font-size:4.40px"><span class="c">额定</span> FSB</div>
<div class="czf" style="left:32.0px;top:119.60px;width:37.6px;height:5.6px;line-height:5.1px;font-size:4.15px;background:#f0f0f0"></div>
<div class="a" style="left:74.5px;top:95.2px;width:78.0px;height:33.7px;border:0.3px solid #dedede;border-radius:0.8px"></div>
<div class="cz" style="left:76.8px;top:92.20px;background:#f0f0f0;padding:0 0.6px;font-size:4.40px;color:#111"><span class="c">缓存</span></div>
<div class="cz" style="left:55.5px;width:40px;text-align:right;top:98.70px;color:#111;font-size:4.40px"><span class="c">一级</span> <span class="c">数据</span></div>
<div class="czf" style="left:97.2px;top:98.90px;width:54.2px;height:5.6px;line-height:5.1px;font-size:4.15px;">8 x 48 KB + 12 x 32 KB</div>
<div class="cz" style="left:55.5px;width:40px;text-align:right;top:105.50px;color:#111;font-size:4.40px"><span class="c">一级</span> <span class="c">指令</span></div>
<div class="czf" style="left:97.2px;top:105.70px;width:54.2px;height:5.6px;line-height:5.1px;font-size:4.15px;">8 x 32 KB + 12 x 64 KB</div>
<div class="cz" style="left:55.5px;width:40px;text-align:right;top:112.50px;color:#111;font-size:4.40px"><span class="c">二级</span></div>
<div class="czf" style="left:97.2px;top:112.70px;width:54.2px;height:5.6px;line-height:5.1px;font-size:4.15px;">8 x 2 MB + 3 x 4 MB</div>
<div class="cz" style="left:55.5px;width:40px;text-align:right;top:119.40px;color:#111;font-size:4.40px"><span class="c">三级</span></div>
<div class="czf" style="left:97.2px;top:119.60px;width:54.2px;height:5.6px;line-height:5.1px;font-size:4.15px;">33 MBytes</div>
<div class="a" style="left:3.2px;top:131.6px;width:149.3px;height:13.3px;border:0.3px solid #dedede;border-radius:0.8px"></div>
<div class="cz" style="left:-11.3px;width:40px;text-align:right;top:134.80px;color:#111;font-size:4.40px"><span class="c">已选择</span></div>
<div class="czf" style="left:32.4px;top:134.70px;width:36.6px;height:6.2px;line-height:5.6px;text-align:left;padding-left:1px;color:#888;border-color:#b0b0b0;font-size:4.1px">处理器 #1</div>
<svg class="a" style="left:64.2px;top:135.80px" width="4" height="4" viewBox="0 0 4 4"><path d="M0.8 1.4 L2 2.8 L3.2 1.4" stroke="#555" stroke-width="0.5" fill="none"/></svg>
<div class="cz" style="left:48.2px;width:40px;text-align:right;top:134.80px;color:#111;font-size:4.40px"><span class="c">核心数</span></div>
<div class="czf" style="left:89.8px;top:135.00px;width:21.7px;height:5.6px;line-height:5.1px;font-size:4.15px;">8P + 12E</div>
<div class="cz" style="left:90.7px;width:40px;text-align:right;top:134.80px;color:#111;font-size:4.40px"><span class="c">线程数</span></div>
<div class="czf" style="left:133.2px;top:135.00px;width:14.4px;height:5.6px;line-height:5.1px;font-size:4.15px;">28</div>
<div class="cz" style="left:3.5px;top:147.30px;height:8px;line-height:8px;font-size:7.4px;font-style:italic;font-weight:bold;color:#959595;letter-spacing:0">CPU-Z</div>
<div class="cz" style="left:30.8px;top:149.00px;font-size:4.4px;font-weight:bold;color:#222">Ver. 2.08.0.x64</div>
<div class="a" style="left:66.0px;top:147.6px;width:21.8px;height:6.6px;line-height:6.2px;background:#f3f3f3;border:0.3px solid #d4d4d4;text-align:center;font-size:4.40px;color:#111">工具</div>
<div class="a" style="left:88.4px;top:147.6px;width:6.0px;height:6.6px;line-height:6.2px;background:#f3f3f3;border:0.3px solid #d4d4d4;text-align:center;font-size:4.40px;color:#111"><span style="font-size:2.6px">▼</span></div>
<div class="a" style="left:96.4px;top:147.6px;width:26.4px;height:6.6px;line-height:6.2px;background:#f3f3f3;border:0.3px solid #d4d4d4;text-align:center;font-size:4.40px;color:#111">验证</div>
<div class="a" style="left:125.0px;top:147.6px;width:27.5px;height:6.6px;line-height:6.2px;background:#f3f3f3;border:0.3px solid #d4d4d4;text-align:center;font-size:4.40px;color:#111">确定</div>
</div>
<div class="win" style="left:484.6px;top:240.3px;width:308.1px;height:229.0px;background:#f9f9f9;border-radius:2.6px;box-shadow:0 0 2px rgba(0,0,0,.5);font-size:4.1px;color:#262626">
<div class="a" style="left:0;top:0;width:308.1px;height:14.7px;background:#f0f4fa"></div>
<svg class="a" style="left:3.6px;top:2.9px" width="5" height="5.6" viewBox="0 0 10 11"><path d="M5 0.3 C6 3 9.2 4.2 8.8 7.4 C8.5 9.8 6.6 10.8 5 10.8 C3 10.8 1.1 9.6 1.2 7.2 C1.3 5.4 2.6 4.8 3 3.2 C3.8 4 4.2 4.6 4.3 5.4 C5.2 4.2 5.3 2.2 5 0.3 Z" fill="#f2922a"/><path d="M5 5.5 C6 6.8 7 7.4 6.6 8.9 C6.3 10 5.5 10.4 5 10.4 C4.2 10.4 3.3 9.8 3.4 8.6 C3.5 7.4 4.6 6.9 5 5.5 Z" fill="#fcd24a"/></svg>
<div class="ad" style="left:10.8px;top:2.80px;color:#222;font-size:4.50px;">System Stability Test - AIDA64</div>
<svg class="a" style="left:277.4px;top:1.5px" width="26" height="8" viewBox="0 0 26 8"><rect x="1.6" y="2.4" width="3.2" height="3.2" rx="0.5" fill="none" stroke="#333" stroke-width="0.55"/><path d="M2.4 2.2 H4.4 Q5 2.2 5 2.8" stroke="#333" stroke-width="0.5" fill="none"/><path d="M19.8 2.2 L23.2 5.6 M23.2 2.2 L19.8 5.6" stroke="#333" stroke-width="0.55"/></svg>
<svg class="a" style="left:7.6px;top:20.70px" width="6.6" height="6" viewBox="0 0 6.6 6"><rect x="0.6" y="2.2" width="5.4" height="1.3" fill="#666" transform="rotate(-8 3 3)"/></svg>
<svg class="a" style="left:16.3px;top:21.10px" width="5.2" height="5.2" viewBox="0 0 10 10"><rect x="0.6" y="0.6" width="8.8" height="8.8" rx="1.2" fill="#fdfdfd" stroke="#8e8e8e" stroke-width="0.8"/></svg>
<div class="ad" style="left:22.8px;top:20.70px;color:#2a2a2a;font-size:4.40px;">Stress CPU</div>
<svg class="a" style="left:7.6px;top:28.30px" width="6.6" height="6" viewBox="0 0 6.6 6"><rect x="0.8" y="0.8" width="4.8" height="4.2" fill="#d9d9d9" stroke="#9a9a9a" stroke-width="0.4"/></svg>
<svg class="a" style="left:16.3px;top:28.70px" width="5.2" height="5.2" viewBox="0 0 10 10"><rect x="0.3" y="0.3" width="9.4" height="9.4" rx="1.2" fill="#1a5cb0"/><path d="M2.2 5.2 L4.2 7.2 L7.8 3" stroke="#fff" stroke-width="1.3" fill="none"/></svg>
<div class="ad" style="left:22.8px;top:28.30px;color:#2a2a2a;font-size:4.40px;">Stress FPU</div>
<svg class="a" style="left:7.6px;top:36.00px" width="6.6" height="6" viewBox="0 0 6.6 6"><rect x="0.4" y="2" width="5.8" height="1.8" fill="#444" transform="rotate(-10 3 3)"/></svg>
<svg class="a" style="left:16.3px;top:36.40px" width="5.2" height="5.2" viewBox="0 0 10 10"><rect x="0.6" y="0.6" width="8.8" height="8.8" rx="1.2" fill="#fdfdfd" stroke="#8e8e8e" stroke-width="0.8"/></svg>
<div class="ad" style="left:22.8px;top:36.00px;color:#2a2a2a;font-size:4.40px;">Stress cache</div>
<svg class="a" style="left:7.6px;top:43.50px" width="6.6" height="6" viewBox="0 0 6.6 6"><rect x="0.4" y="1.4" width="5.8" height="2.8" fill="#2f6b3a"/></svg>
<svg class="a" style="left:16.3px;top:43.90px" width="5.2" height="5.2" viewBox="0 0 10 10"><rect x="0.6" y="0.6" width="8.8" height="8.8" rx="1.2" fill="#fdfdfd" stroke="#8e8e8e" stroke-width="0.8"/></svg>
<div class="ad" style="left:22.8px;top:43.50px;color:#2a2a2a;font-size:4.40px;">Stress system memory</div>
<svg class="a" style="left:7.6px;top:50.90px" width="6.6" height="6" viewBox="0 0 6.6 6"><rect x="0.8" y="2.8" width="5" height="1.2" fill="#aaa"/></svg>
<svg class="a" style="left:16.3px;top:51.30px" width="5.2" height="5.2" viewBox="0 0 10 10"><rect x="0.6" y="0.6" width="8.8" height="8.8" rx="1.2" fill="#fdfdfd" stroke="#8e8e8e" stroke-width="0.8"/></svg>
<div class="ad" style="left:22.8px;top:50.90px;color:#2a2a2a;font-size:4.40px;">Stress local disks</div>
<svg class="a" style="left:7.6px;top:58.30px" width="6.6" height="6" viewBox="0 0 6.6 6"><rect x="0.8" y="0.8" width="3.6" height="3" fill="#3c8bd0"/><rect x="2.2" y="2.4" width="3.6" height="3" fill="#6a7a88"/></svg>
<svg class="a" style="left:16.3px;top:58.70px" width="5.2" height="5.2" viewBox="0 0 10 10"><rect x="0.6" y="0.6" width="8.8" height="8.8" rx="1.2" fill="#fdfdfd" stroke="#8e8e8e" stroke-width="0.8"/></svg>
<div class="ad" style="left:22.8px;top:58.30px;color:#2a2a2a;font-size:4.40px;">Stress GPU(s)</div>
<div class="a" style="left:69.6px;top:20.6px;width:175.6px;height:44.6px;background:#fff;border:0.4px solid #d6d6d6;border-top:0.7px solid #c6c6c6"></div>
<div class="ad" style="left:72.6px;top:22.40px;color:#2a2a2a;font-size:4.70px;">Date &amp; Time</div>
<div class="ad" style="left:130.0px;top:22.40px;color:#2a2a2a;font-size:4.70px;">Status</div>
<div class="a" style="left:70.2px;top:29.1px;width:167.6px;height:6.6px;background:#ececec"></div>
<div class="ad" style="left:72.6px;top:29.50px;color:#2a2a2a;font-size:4.60px;">2023/11/8 20:11:10</div>
<div class="ad" style="left:130.0px;top:29.50px;color:#2a2a2a;font-size:4.60px;">Stability Test: Started</div>
<div class="a" style="left:9.8px;top:69.1px;width:31.8px;height:9.2px;background:#fff;border:0.3px solid #dcdcdc;border-bottom:none"></div>
<div class="ad" style="left:9.0px;width:33.6px;text-align:center;top:70.60px;font-size:4.45px;color:#1a1a1a">Temperatures</div>
<div class="ad" style="left:40.2px;width:31.5px;text-align:center;top:70.60px;font-size:4.45px;color:#1a1a1a">Cooling Fans</div>
<div class="ad" style="left:70.0px;width:23.0px;text-align:center;top:70.60px;font-size:4.45px;color:#1a1a1a">Voltages</div>
<div class="ad" style="left:91.9px;width:19.5px;text-align:center;top:70.60px;font-size:4.45px;color:#1a1a1a">Powers</div>
<div class="ad" style="left:110.4px;width:18.7px;text-align:center;top:70.60px;font-size:4.45px;color:#1a1a1a">Clocks</div>
<div class="ad" style="left:128.4px;width:20.5px;text-align:center;top:70.60px;font-size:4.45px;color:#1a1a1a">Unified</div>
<div class="ad" style="left:147.3px;width:24.1px;text-align:center;top:70.60px;font-size:4.45px;color:#1a1a1a">Statistics</div>
<div class="a" style="left:9.8px;top:79.7px;width:8.3px;height:56.0px;background:#e6e6e6"></div>
<div class="a" style="left:9.8px;top:80.7px;width:8.3px;height:3.5px;background:#1f74c8"></div>
<svg class="a" style="left:18.4px;top:78.3px" width="280.6" height="57.3" viewBox="503.0 318.6 280.6 57.3" font-family="Liberation Sans, sans-serif">
<defs><pattern id="gr1" x="522.5" y="330.1" width="3.1" height="6.94" patternUnits="userSpaceOnUse"><path d="M0.2 0 V6.94" stroke="#0c5a1a" stroke-width="0.36" fill="none"/><path d="M0 0.2 H3.1" stroke="#0a4a14" stroke-width="0.36"/><path d="M0 3.67 H3.1" stroke="#1c7a30" stroke-width="0.4"/></pattern><pattern id="gr2" x="511.7" y="389.8" width="3.1" height="6.96" patternUnits="userSpaceOnUse"><path d="M0.2 0 V6.96" stroke="#0c5a1a" stroke-width="0.36" fill="none"/><path d="M0 0.2 H3.1" stroke="#0a4a14" stroke-width="0.36"/><path d="M0 3.68 H3.1" stroke="#1c7a30" stroke-width="0.4"/></pattern></defs>
<rect x="503.0" y="318.6" width="280.6" height="57.3" fill="#000"/>
<rect x="522.5" y="330.1" width="241.2" height="35.0" fill="url(#gr1)"/>
<rect x="529.5" y="322.4" width="4.3" height="4.3" fill="#f6f6f6"/><path d="M530.1 324.7 l1.1 1.1 l1.9 -2.3" stroke="#444" stroke-width="0.5" fill="none"/>
<text x="535.8" y="326.0" font-size="4.2" fill="#cfc25c">Motherboard</text>
<rect x="563.9" y="322.4" width="4.3" height="4.3" fill="#f6f6f6"/><path d="M564.5 324.7 l1.1 1.1 l1.9 -2.3" stroke="#444" stroke-width="0.5" fill="none"/>
<text x="570.2" y="326.0" font-size="4.2" fill="#c4c4c4">CPU</text>
<rect x="581.4" y="322.4" width="4.3" height="4.3" fill="#f6f6f6"/><path d="M582.0 324.7 l1.1 1.1 l1.9 -2.3" stroke="#444" stroke-width="0.5" fill="none"/>
<text x="587.4" y="326.0" font-size="4.2" fill="#38c838">CPU Core #1</text>
<rect x="614.9" y="322.4" width="4.3" height="4.3" fill="#f6f6f6"/><path d="M615.5 324.7 l1.1 1.1 l1.9 -2.3" stroke="#444" stroke-width="0.5" fill="none"/>
<text x="620.8" y="326.0" font-size="4.2" fill="#58b8e8">CPU Core #2</text>
<rect x="648.5" y="322.4" width="4.3" height="4.3" fill="#f6f6f6"/><path d="M649.1 324.7 l1.1 1.1 l1.9 -2.3" stroke="#444" stroke-width="0.5" fill="none"/>
<text x="654.5" y="326.0" font-size="4.2" fill="#d048d0">CPU Core #3</text>
<rect x="681.4" y="322.4" width="4.3" height="4.3" fill="#f6f6f6"/><path d="M682.0 324.7 l1.1 1.1 l1.9 -2.3" stroke="#444" stroke-width="0.5" fill="none"/>
<text x="687.5" y="326.0" font-size="4.2" fill="#d8d8d8">CPU Core #4</text>
<rect x="714.4" y="322.4" width="4.3" height="4.3" fill="#f6f6f6"/><path d="M715.0 324.7 l1.1 1.1 l1.9 -2.3" stroke="#444" stroke-width="0.5" fill="none"/>
<text x="720.4" y="326.0" font-size="4.2" fill="#e89040">GALAX HA1K0500</text>
<text x="521.4" y="331.6" font-size="4.3" fill="#f0f0f0" text-anchor="end">100°C</text>
<text x="521.4" y="366.0" font-size="4.3" fill="#f0f0f0" text-anchor="end">0°C</text>
<text x="764.4" y="369.8" font-size="3.5" fill="#f0f0f0" text-anchor="end">20:11:09</text>
<path d="M763.3 365 V336.5" stroke="#8ad08a" stroke-width="0.6"/>
<text x="765.2" y="337.4" font-size="3.3" fill="#e050e0">83</text><text x="769.4" y="338.6" font-size="3.3" fill="#58b8e8">80</text><text x="769.0" y="336.6" font-size="3.3" fill="#38c838">82</text>
<text x="765.2" y="352.4" font-size="3.3" fill="#d8c860">33</text><text x="769.6" y="351.2" font-size="3.3" fill="#e89040">28</text>
</svg>
<svg class="a" style="left:8.8px;top:137.2px" width="290.5" height="58.1" viewBox="493.4 377.5 290.5 58.1" font-family="Liberation Sans, sans-serif">
<rect x="493.4" y="377.5" width="290.5" height="58.1" fill="#000"/>
<rect x="511.7" y="389.8" width="250.4" height="35.0" fill="url(#gr2)"/>
<text x="580.0" y="385.2" font-size="3.9" fill="#e0d040">CPU Usage</text><text x="602.0" y="385.2" font-size="3.9" fill="#e8e8e8">|</text><text x="606.3" y="385.2" font-size="4.03" fill="#e02020">CPU Throttling (max: 12%) - Overheating Detected!</text>
<text x="510.8" y="391.1" font-size="3.5" fill="#f0f0f0" text-anchor="end">100%</text><text x="510.8" y="425.9" font-size="3.5" fill="#f0f0f0" text-anchor="end">0%</text>
<text x="766.6" y="391.1" font-size="3.5" fill="#e0e060">100%</text><text x="767.2" y="421.8" font-size="3.5" fill="#e02020">12%</text>
<path d="M754.5 424.4 H761.6 L762.6 390.2 H764" stroke="#d8e060" stroke-width="0.6" fill="none"/><path d="M754.5 424.6 H760 L762 420.6 H764" stroke="#e02020" stroke-width="0.5" fill="none"/>
</svg>
<div class="ad" style="left:8.8px;top:202.50px;color:#2a2a2a;font-size:4.55px;">Remaining Battery:</div>
<div class="ad" style="left:91.0px;top:202.50px;color:#2a2a2a;font-size:4.50px;">Test Started:</div>
<div class="ad" style="left:181.4px;top:202.50px;color:#2a2a2a;font-size:4.50px;">Elapsed Time:</div>
<div class="a" style="left:52.6px;top:201.1px;width:30.6px;height:8.6px;background:#000;color:#30d030;text-align:center;line-height:8.6px;font-size:4.3px;white-space:nowrap">No battery</div>
<div class="a" style="left:121.0px;top:201.1px;width:53.2px;height:8.6px;background:#000;color:#30d030;text-align:center;line-height:8.6px;font-size:4.3px;white-space:nowrap">2023/11/8 20:11:09</div>
<div class="a" style="left:214.9px;top:201.1px;width:30.0px;height:8.6px;background:#000;color:#30d030;text-align:center;line-height:8.6px;font-size:4.3px;white-space:nowrap">00:00:05</div>
<div class="a" style="left:0;top:215.3px;width:308.1px;height:13.7px;background:#f2f2f2"></div>
<div class="btn" style="left:4.0px;top:218.9px;width:26.6px;color:#b4b4b4;background:#f3f3f3;border-color:#efefef;font-size:4.3px">Start</div>
<div class="btn" style="left:34.7px;top:218.9px;width:26.7px;color:#2a2a2a;font-size:4.3px">Stop</div>
<div class="btn" style="left:74.4px;top:218.9px;width:26.6px;color:#2a2a2a;font-size:4.3px">Clear</div>
<div class="btn" style="left:105.1px;top:218.9px;width:26.5px;color:#2a2a2a;font-size:4.3px">Save</div>
<div class="btn" style="left:144.8px;top:218.9px;width:26.8px;color:#2a2a2a;font-size:4.3px">CPUID</div>
<div class="btn" style="left:175.9px;top:218.9px;width:27.5px;color:#2a2a2a;font-size:4.3px">Preferences</div>
<div class="btn" style="left:277.6px;top:218.9px;width:26.8px;color:#b4b4b4;background:#f3f3f3;border-color:#efefef;font-size:4.3px">Close</div>
</div>
</div></div></body></html>
